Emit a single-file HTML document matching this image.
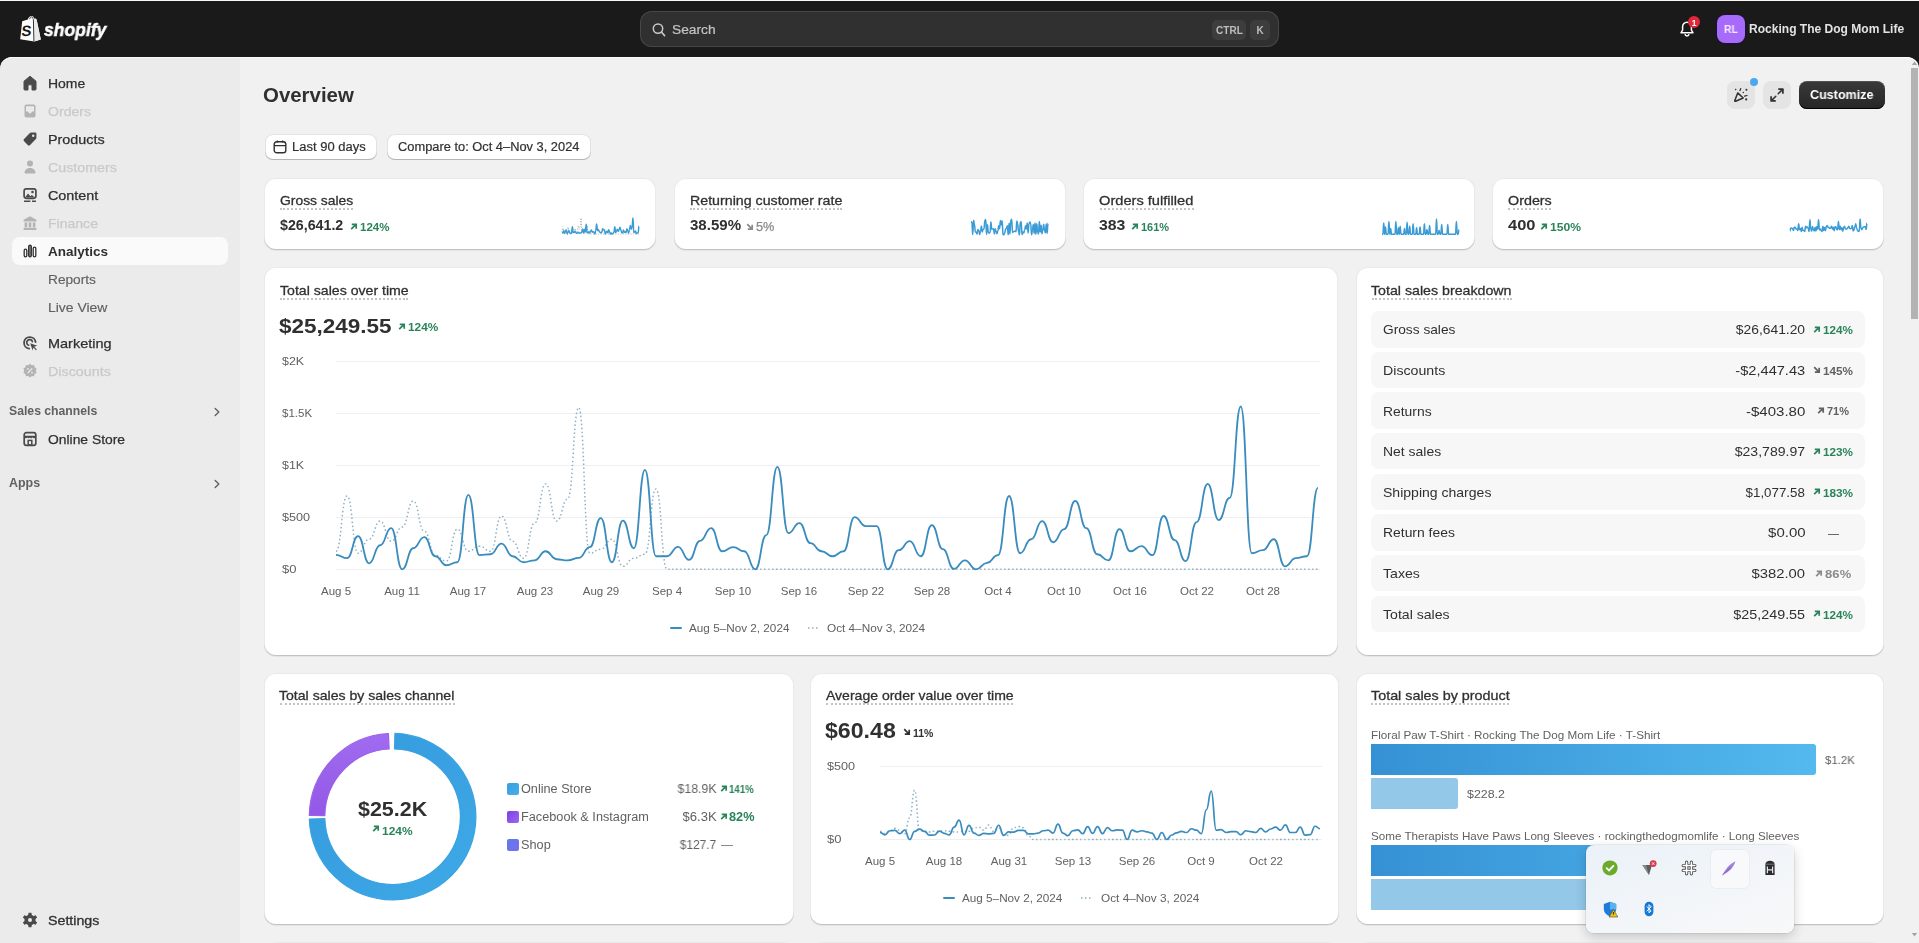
<!DOCTYPE html><html><head><meta charset="utf-8"><title>Analytics</title><style>
*{box-sizing:border-box;margin:0;padding:0}
html,body{width:1919px;height:943px;overflow:hidden;background:#1a1a1a;font-family:"Liberation Sans",sans-serif;color:#303030}
.abs{position:absolute}
#topline{left:0;top:0;width:1919px;height:1px;background:#fbf6ef}
#topbar{left:0;top:1px;width:1919px;height:56px;background:#1a1a1a}
#side{left:0;top:57px;width:240px;height:886px;background:#ebebeb;border-top-left-radius:12px;box-shadow:inset 0 1px 0 #f7f7f7}
#main{left:240px;top:57px;width:1679px;height:886px;background:#f1f1f1;border-top-right-radius:12px;box-shadow:inset 0 1px 0 #fbfbfb}
.card{position:absolute;background:#fff;border-radius:12px;box-shadow:0 1px 0 rgba(26,26,26,.06),inset 0 -1px 0 rgba(0,0,0,.16),inset 0 0 0 1px rgba(0,0,0,.085)}
.ul{position:absolute;height:2px;border-top:2px dotted #c4c4c4}
.btn{position:absolute;background:#fff;border-radius:8px;box-shadow:inset 0 -1px 0 #b5b5b5,inset 0 0 0 1px #e3e3e3}
</style></head><body><div id="topline" class="abs"></div><div id="topbar" class="abs"></div><div id="side" class="abs"></div><div id="main" class="abs"></div><svg class="abs" style="left:19px;top:15px" width="23" height="28" viewBox="0 0 23 28">
<path d="M3.2 6.2 L8.8 4.6 C9.6 2 11 0.8 12.6 0.9 C14 1 14.9 2.2 15.1 3.6 L16.6 3.4 L17.6 4.4 L21.8 24.6 L15.2 26.6 L1.2 24.2 Z" fill="#fff"/>
<path d="M15.2 4 L17.6 4.4 L21.8 24.6 L15.2 26.6 Z" fill="#e9e9e9"/>
<path d="M14.9 26.4 L14.4 4.2" stroke="#1a1a1a" stroke-width="0.9"/>
<path d="M10.6 4.2 C11 2.6 11.8 1.8 12.6 1.9 C13.4 2 13.8 2.8 13.9 3.8" stroke="#1a1a1a" stroke-width="0.8" fill="none"/>
<text x="4.3" y="21.2" font-family="Liberation Sans" font-weight="bold" font-size="15" fill="#1a1a1a" transform="skewX(-6)">S</text>
</svg><div style="position:absolute;white-space:nowrap;will-change:transform;top:19px;font-size:19px;line-height:21px;color:#ffffff;font-weight:bold;transform:scaleX(0.922);transform-origin:left;left:43.65px;font-style:italic;-webkit-text-stroke:0.5px #fff;">shopify</div><div class="abs" style="left:640px;top:11px;width:639px;height:36px;border-radius:12px;background:#303030;box-shadow:inset 0 0 0 1px #474747"></div><svg class="abs" style="left:651px;top:22px" width="16" height="16" viewBox="0 0 16 16"><circle cx="7" cy="6.6" r="4.7" stroke="#c9c9c9" stroke-width="1.5" fill="none"/><path d="M10.4 10L13.6 13.6" stroke="#c9c9c9" stroke-width="1.6" stroke-linecap="round"/></svg><div style="position:absolute;white-space:nowrap;will-change:transform;top:22px;font-size:13px;line-height:15px;color:#c4c4c4;-webkit-text-stroke-width:0.2px;transform:scaleX(1.057);transform-origin:left;left:671.85px;">Search</div><div class="abs" style="left:1212px;top:20px;width:34px;height:20px;border-radius:5px;background:#3d3d3d"></div><div style="position:absolute;white-space:nowrap;will-change:transform;top:25px;font-size:10px;line-height:11px;color:#bdbdbd;font-weight:bold;transform:scaleX(1.005);transform-origin:left;left:1215.5px;">CTRL</div><div class="abs" style="left:1250px;top:20px;width:20px;height:20px;border-radius:5px;background:#3d3d3d"></div><div style="position:absolute;white-space:nowrap;will-change:transform;top:25px;font-size:10px;line-height:11px;color:#bdbdbd;font-weight:bold;left:960px;width:600px;text-align:center;">K</div><svg class="abs" style="left:1678px;top:19px" width="18" height="19" viewBox="0 0 18 19">
<path d="M9 3.2C6.5 3.2 4.6 5.2 4.6 7.8V11L3 13.8H15L13.4 11V7.8C13.4 5.2 11.5 3.2 9 3.2Z" stroke="#fff" stroke-width="1.5" fill="none" stroke-linejoin="round"/>
<path d="M7 15.2C7.2 16.4 8 17 9 17C10 17 10.8 16.4 11 15.2" stroke="#fff" stroke-width="1.5" fill="none"/></svg><div class="abs" style="left:1688px;top:16px;width:12px;height:12px;border-radius:6px;background:#e0283a"></div><div style="position:absolute;white-space:nowrap;will-change:transform;top:17.6px;font-size:8.5px;line-height:10px;color:#ffffff;font-weight:bold;left:1394.2px;width:600px;text-align:center;">1</div><div class="abs" style="left:1716px;top:14px;width:30px;height:30px;border-radius:9px;background:#1e0f33"></div><div class="abs" style="left:1717px;top:15px;width:28px;height:28px;border-radius:8px;background:#a66bfa"></div><div style="position:absolute;white-space:nowrap;will-change:transform;top:23px;font-size:11px;line-height:12px;color:#f6e8ff;font-weight:bold;transform:scaleX(0.943);transform-origin:left;left:1724.25px;">RL</div><div style="position:absolute;white-space:nowrap;will-change:transform;top:22px;font-size:12px;line-height:14px;color:#e3e3e3;font-weight:bold;transform:scaleX(1.003);transform-origin:left;left:1749.2px;">Rocking The Dog Mom Life</div><svg class="abs" style="left:21px;top:74px" width="18" height="18" viewBox="0 0 18 18"><path d="M9 2.2L3 7.2V15.2C3 15.6 3.3 16 3.8 16H7V11.8C7 11.2 7.4 10.8 8 10.8H10C10.6 10.8 11 11.2 11 11.8V16H14.2C14.7 16 15 15.6 15 15.2V7.2Z" fill="#4a4a4a" stroke="#4a4a4a" stroke-width="1" stroke-linejoin="round"/></svg><div style="position:absolute;white-space:nowrap;will-change:transform;top:76px;font-size:13px;line-height:15px;color:#303030;-webkit-text-stroke-width:0.25px;transform:scaleX(1.074);transform-origin:left;left:47.75px;">Home</div><svg class="abs" style="left:21px;top:102px" width="18" height="18" viewBox="0 0 18 18"><path d="M3.5 4.5C3.5 3.4 4.4 2.5 5.5 2.5H12.5C13.6 2.5 14.5 3.4 14.5 4.5V13.5C14.5 14.6 13.6 15.5 12.5 15.5H5.5C4.4 15.5 3.5 14.6 3.5 13.5Z" fill="#b3b3b3"/><path d="M5 4.2H13V9.6H11C10.6 10.8 9.9 11.4 9 11.4C8.1 11.4 7.4 10.8 7 9.6H5Z" fill="#ebebeb"/></svg><div style="position:absolute;white-space:nowrap;will-change:transform;top:104px;font-size:13px;line-height:15px;color:#c9c9c9;-webkit-text-stroke-width:0.25px;transform:scaleX(1.084);transform-origin:left;left:47.75px;">Orders</div><svg class="abs" style="left:21px;top:130px" width="18" height="18" viewBox="0 0 18 18"><path d="M10.2 2.6H14.2C14.9 2.6 15.4 3.1 15.4 3.8V7.8C15.4 8.3 15.2 8.7 14.9 9.1L9.1 14.9C8.4 15.6 7.4 15.6 6.7 14.9L3.1 11.3C2.4 10.6 2.4 9.6 3.1 8.9L8.9 3.1C9.3 2.8 9.7 2.6 10.2 2.6Z" fill="#4a4a4a"/><circle cx="12.2" cy="5.8" r="1.2" fill="#ebebeb"/></svg><div style="position:absolute;white-space:nowrap;will-change:transform;top:132px;font-size:13px;line-height:15px;color:#303030;-webkit-text-stroke-width:0.25px;transform:scaleX(1.105);transform-origin:left;left:47.75px;">Products</div><svg class="abs" style="left:21px;top:158px" width="18" height="18" viewBox="0 0 18 18"><circle cx="9" cy="5.6" r="3" fill="#b3b3b3"/><path d="M3.6 14.6C3.6 11.8 6 10 9 10C12 10 14.4 11.8 14.4 14.6C14.4 15.2 14 15.6 13.4 15.6H4.6C4 15.6 3.6 15.2 3.6 14.6Z" fill="#b3b3b3"/></svg><div style="position:absolute;white-space:nowrap;will-change:transform;top:160px;font-size:13px;line-height:15px;color:#c9c9c9;-webkit-text-stroke-width:0.25px;transform:scaleX(1.096);transform-origin:left;left:47.75px;">Customers</div><svg class="abs" style="left:21px;top:186px" width="18" height="18" viewBox="0 0 18 18"><rect x="3.1" y="2.9" width="11.8" height="9.4" rx="2.2" stroke="#4a4a4a" stroke-width="1.7" fill="none"/><path d="M4 11.4L7 7.6L9.4 10.2L10.8 9L14 11.6Z" fill="#4a4a4a"/><circle cx="11.5" cy="6" r="1.3" fill="#4a4a4a"/><path d="M3 15.3H9.4M11 15.3H15" stroke="#4a4a4a" stroke-width="1.6"/></svg><div style="position:absolute;white-space:nowrap;will-change:transform;top:188px;font-size:13px;line-height:15px;color:#303030;-webkit-text-stroke-width:0.25px;transform:scaleX(1.105);transform-origin:left;left:47.75px;">Content</div><svg class="abs" style="left:21px;top:214px" width="18" height="18" viewBox="0 0 18 18"><path d="M9 2.2L2.6 5.8V7.6H15.4V5.8Z" fill="#b3b3b3"/><rect x="3.6" y="8.4" width="2.6" height="4.8" fill="#b3b3b3"/><rect x="7.7" y="8.4" width="2.6" height="4.8" fill="#b3b3b3"/><rect x="11.8" y="8.4" width="2.6" height="4.8" fill="#b3b3b3"/><rect x="2.6" y="13.8" width="12.8" height="2.2" rx="0.6" fill="#b3b3b3"/></svg><div style="position:absolute;white-space:nowrap;will-change:transform;top:216px;font-size:13px;line-height:15px;color:#c9c9c9;-webkit-text-stroke-width:0.25px;transform:scaleX(1.080);transform-origin:left;left:47.75px;">Finance</div><div class="abs" style="left:12px;top:237px;width:216px;height:28px;border-radius:8px;background:#fafafa"></div><svg class="abs" style="left:21px;top:242px" width="18" height="18" viewBox="0 0 18 18"><rect x="3.2" y="7.2" width="2.6" height="7.6" rx="1.3" stroke="#303030" stroke-width="1.3" fill="none"/><rect x="7.7" y="3.2" width="2.6" height="11.6" rx="1.3" stroke="#303030" stroke-width="1.3" fill="#8a8a8a"/><rect x="12.2" y="5.2" width="2.6" height="9.6" rx="1.3" stroke="#303030" stroke-width="1.3" fill="none"/></svg><div style="position:absolute;white-space:nowrap;will-change:transform;top:244px;font-size:13px;line-height:15px;color:#303030;font-weight:bold;transform:scaleX(1.040);transform-origin:left;left:47.75px;">Analytics</div><div style="position:absolute;white-space:nowrap;will-change:transform;top:272px;font-size:13px;line-height:15px;color:#616161;-webkit-text-stroke-width:0.15px;transform:scaleX(1.053);transform-origin:left;left:47.95px;">Reports</div><div style="position:absolute;white-space:nowrap;will-change:transform;top:300px;font-size:13px;line-height:15px;color:#616161;-webkit-text-stroke-width:0.15px;transform:scaleX(1.073);transform-origin:left;left:47.95px;">Live View</div><svg class="abs" style="left:21px;top:334px" width="18" height="18" viewBox="0 0 18 18"><path d="M14.6 8.2A5.8 5.8 0 1 0 8.2 14.6" stroke="#4a4a4a" stroke-width="1.8" fill="none" stroke-linecap="round"/><path d="M11.4 7.6A2.9 2.9 0 1 0 7.6 11.2" stroke="#4a4a4a" stroke-width="1.7" fill="none" stroke-linecap="round"/><path d="M9.2 9.2L16.2 11.8L13.2 12.8L15.8 15.4L15 16.2L12.4 13.6L11.6 16.4Z" fill="#4a4a4a"/></svg><div style="position:absolute;white-space:nowrap;will-change:transform;top:336.4px;font-size:13px;line-height:15px;color:#303030;-webkit-text-stroke-width:0.25px;transform:scaleX(1.114);transform-origin:left;left:47.65px;">Marketing</div><svg class="abs" style="left:21px;top:362px" width="18" height="18" viewBox="0 0 18 18"><path d="M9 1.8L10.8 3.2L13.1 3L13.6 5.2L15.6 6.4L14.8 8.6L15.6 10.8L13.6 12L13.1 14.2L10.8 14L9 15.6L7.2 14L4.9 14.2L4.4 12L2.4 10.8L3.2 8.6L2.4 6.4L4.4 5.2L4.9 3L7.2 3.2Z" fill="#b3b3b3"/><path d="M6.8 11L11.2 6.4" stroke="#ebebeb" stroke-width="1.3"/><circle cx="7" cy="6.8" r="0.9" fill="#ebebeb"/><circle cx="11" cy="10.6" r="0.9" fill="#ebebeb"/></svg><div style="position:absolute;white-space:nowrap;will-change:transform;top:364px;font-size:13px;line-height:15px;color:#c9c9c9;-webkit-text-stroke-width:0.25px;transform:scaleX(1.102);transform-origin:left;left:47.65px;">Discounts</div><div style="position:absolute;white-space:nowrap;will-change:transform;top:404px;font-size:12px;line-height:14px;color:#616161;font-weight:bold;transform:scaleX(1.018);transform-origin:left;left:8.9px;">Sales channels</div><svg class="abs" style="left:210px;top:405px" width="14" height="14" viewBox="0 0 14 14"><path d="M5.2 3.4L8.8 7L5.2 10.6" stroke="#616161" stroke-width="1.4" fill="none" stroke-linecap="round" stroke-linejoin="round"/></svg><svg class="abs" style="left:21px;top:430px" width="18" height="18" viewBox="0 0 18 18"><rect x="3.2" y="2.6" width="11.6" height="12.8" rx="2.2" stroke="#4a4a4a" stroke-width="1.7" fill="none"/><path d="M3.6 5.8H14.4V7.6C13.6 8.6 12.4 8.6 11.6 7.6C10.8 8.6 9.6 8.6 9 7.6C8.4 8.6 7.2 8.6 6.4 7.6C5.6 8.6 4.4 8.6 3.6 7.6Z" fill="#4a4a4a"/><rect x="7.2" y="10.4" width="3.6" height="4.6" stroke="#4a4a4a" stroke-width="1.5" fill="none"/></svg><div style="position:absolute;white-space:nowrap;will-change:transform;top:432px;font-size:13px;line-height:15px;color:#303030;-webkit-text-stroke-width:0.25px;transform:scaleX(1.066);transform-origin:left;left:47.65px;">Online Store</div><div style="position:absolute;white-space:nowrap;will-change:transform;top:476px;font-size:12px;line-height:14px;color:#616161;font-weight:bold;transform:scaleX(1.037);transform-origin:left;left:8.8px;">Apps</div><svg class="abs" style="left:210px;top:477px" width="14" height="14" viewBox="0 0 14 14"><path d="M5.2 3.4L8.8 7L5.2 10.6" stroke="#616161" stroke-width="1.4" fill="none" stroke-linecap="round" stroke-linejoin="round"/></svg><svg class="abs" style="left:21px;top:911px" width="18" height="18" viewBox="0 0 18 18"><path d="M7.6 1.8H10.4L10.9 3.9L12.6 4.9L14.7 4.2L16.1 6.6L14.5 8.1V9.9L16.1 11.4L14.7 13.8L12.6 13.1L10.9 14.1L10.4 16.2H7.6L7.1 14.1L5.4 13.1L3.3 13.8L1.9 11.4L3.5 9.9V8.1L1.9 6.6L3.3 4.2L5.4 4.9L7.1 3.9Z" fill="#4a4a4a"/><circle cx="9" cy="9" r="2" fill="#ebebeb"/></svg><div style="position:absolute;white-space:nowrap;will-change:transform;top:913px;font-size:13px;line-height:15px;color:#303030;-webkit-text-stroke-width:0.3px;transform:scaleX(1.094);transform-origin:left;left:47.85px;">Settings</div><div style="position:absolute;white-space:nowrap;will-change:transform;top:84.3px;font-size:20px;line-height:22px;color:#303030;font-weight:bold;transform:scaleX(1.021);transform-origin:left;left:263.4px;">Overview</div><div class="abs" style="left:1727px;top:81px;width:28px;height:28px;border-radius:8px;background:#e4e4e4"></div><svg class="abs" style="left:1732px;top:86px" width="18" height="18" viewBox="0 0 18 18">
<path d="M5.7 6.9L11.2 12L3.6 15.2C3 15.4 2.6 15 2.8 14.4Z" stroke="#303030" stroke-width="1.5" fill="none" stroke-linejoin="round"/>
<path d="M3.7 2.6L4.6 3.5L3.7 4.4L2.8 3.5Z" fill="#303030"/><path d="M8 4.6L8.7 2.6M12.6 10.2L15 9.5" stroke="#303030" stroke-width="1.3" stroke-linecap="round"/>
<circle cx="14.4" cy="3.7" r="1.05" fill="#303030"/><circle cx="11.3" cy="6.6" r="0.75" fill="#303030"/><circle cx="14.2" cy="13.4" r="1.1" fill="#303030"/></svg><div class="abs" style="left:1750px;top:78px;width:8px;height:8px;border-radius:4px;background:#4ba8f0"></div><div class="abs" style="left:1763px;top:81px;width:28px;height:28px;border-radius:8px;background:#e4e4e4"></div><svg class="abs" style="left:1768px;top:86px" width="18" height="18" viewBox="0 0 18 18">
<path d="M4.4 13.6L7.8 10.2M10.2 7.8L13.6 4.4" stroke="#303030" stroke-width="1.5" stroke-linecap="round"/>
<path d="M10.9 3.1H14.9V7.1M3.1 10.9V14.9H7.1" stroke="#303030" stroke-width="1.7" fill="none" stroke-linejoin="round" stroke-linecap="round"/></svg><div class="abs" style="left:1799px;top:81px;width:86px;height:28px;border-radius:8px;background:linear-gradient(#3a3a3a,#262626);box-shadow:inset 0 -1px 0 #000,inset 0 1px 0 rgba(255,255,255,.12)"></div><div style="position:absolute;white-space:nowrap;will-change:transform;top:87px;font-size:13px;line-height:15px;color:#ffffff;font-weight:bold;transform:scaleX(0.965);transform-origin:left;left:1810.05px;">Customize</div><div class="btn" style="left:265px;top:134px;width:112px;height:26px"></div><svg class="abs" style="left:272px;top:139px" width="16" height="16" viewBox="0 0 16 16"><rect x="2.2" y="2.8" width="11.6" height="11" rx="2.6" stroke="#303030" stroke-width="1.4" fill="none"/><path d="M2.4 6.6H13.6M5.4 1.6V3.6M10.6 1.6V3.6" stroke="#303030" stroke-width="1.4"/></svg><div style="position:absolute;white-space:nowrap;will-change:transform;top:140.1px;font-size:12.5px;line-height:14px;color:#303030;-webkit-text-stroke-width:0.2px;transform:scaleX(1.039);transform-origin:left;left:291.88px;">Last 90 days</div><div class="btn" style="left:387px;top:134px;width:204px;height:26px"></div><div style="position:absolute;white-space:nowrap;will-change:transform;top:140.1px;font-size:12.5px;line-height:14px;color:#303030;-webkit-text-stroke-width:0.2px;transform:scaleX(1.028);transform-origin:left;left:397.88px;">Compare to: Oct 4–Nov 3, 2024</div><div class="card" style="left:264.3px;top:177.6px;width:392px;height:72.6px"></div><div style="position:absolute;white-space:nowrap;will-change:transform;top:193px;font-size:13.5px;line-height:15px;color:#303030;-webkit-text-stroke-width:0.3px;transform:scaleX(1.028);transform-origin:left;left:279.82px;">Gross sales</div><div class="ul" style="left:280px;top:208px;width:73px"></div><div style="position:absolute;white-space:nowrap;will-change:transform;top:217.2px;font-size:14px;line-height:16px;color:#303030;font-weight:bold;transform:scaleX(1.016);transform-origin:left;left:279.8px;">$26,641.2</div><svg style="position:absolute;left:350.2px;top:222.8px" width="8" height="8" viewBox="0 0 8 8"><path d="M1.2 6.2 L5.6 1.8 M1.8 1.4 H6.2 V5.8" stroke="#29845a" stroke-width="1.7" fill="none" stroke-linecap="butt" stroke-linejoin="miter"/></svg><div style="position:absolute;white-space:nowrap;will-change:transform;top:221px;font-size:11px;line-height:12px;color:#29845a;font-weight:bold;transform:scaleX(1.050);transform-origin:left;left:360.35px;">124%</div><svg class="abs" style="left:562px;top:218px;overflow:visible" width="77" height="16"><path d="M0.0,14.2C0.43,14.23 0.43,8.79 0.87,8.79C1.30,8.79 1.30,14.42 1.73,14.42C2.16,14.42 2.16,13.04 2.60,13.04C3.03,13.04 3.03,11.26 3.46,11.26C3.89,11.26 3.89,13.24 4.33,13.24C4.76,13.24 4.76,11.85 5.19,11.85C5.62,11.85 5.62,9.28 6.06,9.28C6.49,9.28 6.49,12.25 6.92,12.25C7.35,12.25 7.35,14.61 7.79,14.61C8.22,14.61 8.22,15.21 8.65,15.21C9.08,15.21 9.08,12.05 9.52,12.05C9.95,12.05 9.95,14.23 10.38,14.23C10.81,14.23 10.81,13.73 11.25,13.73C11.68,13.73 11.68,14.23 12.11,14.23C12.54,14.23 12.54,10.76 12.98,10.76C13.41,10.76 13.41,13.24 13.84,13.24C14.28,13.24 14.28,14.91 14.71,14.91C15.14,14.91 15.14,11.46 15.57,11.46C16.01,11.46 16.01,7.61 16.44,7.61C16.87,7.61 16.87,11.26 17.30,11.26C17.74,11.26 17.74,9.09 18.17,9.09C18.60,9.09 18.60,0.10 19.03,0.10C19.47,0.10 19.47,14.42 19.90,14.42C20.33,14.42 20.33,14.02 20.76,14.02C21.20,14.02 21.20,13.04 21.63,13.04C22.06,13.04 22.06,15.70 22.49,15.70C22.93,15.70 22.93,14.91 23.36,14.91C23.79,14.91 23.79,14.52 24.22,14.52C24.66,14.52 24.66,8.10 25.09,8.10C25.52,8.10 25.52,16.00 25.96,16.00C26.39,16.00 26.39,16.00 26.82,16.00C27.25,16.00 27.25,16.00 27.69,16.00C28.12,16.00 28.12,16.00 28.55,16.00C28.98,16.00 28.98,16.00 29.42,16.00C29.85,16.00 29.85,16.00 30.28,16.00C30.71,16.00 30.71,16.00 31.15,16.00C31.58,16.00 31.58,16.00 32.01,16.00C32.44,16.00 32.44,16.00 32.88,16.00C33.31,16.00 33.31,16.00 33.74,16.00C34.17,16.00 34.17,16.00 34.61,16.00C35.04,16.00 35.04,16.00 35.47,16.00C35.90,16.00 35.90,16.00 36.34,16.00C36.77,16.00 36.77,16.00 37.20,16.00C37.63,16.00 37.63,16.00 38.07,16.00C38.50,16.00 38.50,16.00 38.93,16.00C39.37,16.00 39.37,16.00 39.80,16.00C40.23,16.00 40.23,16.00 40.66,16.00C41.10,16.00 41.10,16.00 41.53,16.00C41.96,16.00 41.96,16.00 42.39,16.00C42.83,16.00 42.83,16.00 43.26,16.00C43.69,16.00 43.69,16.00 44.12,16.00C44.56,16.00 44.56,16.00 44.99,16.00C45.42,16.00 45.42,16.00 45.85,16.00C46.29,16.00 46.29,16.00 46.72,16.00C47.15,16.00 47.15,16.00 47.58,16.00C48.02,16.00 48.02,16.00 48.45,16.00C48.88,16.00 48.88,16.00 49.31,16.00C49.75,16.00 49.75,16.00 50.18,16.00C50.61,16.00 50.61,16.00 51.04,16.00C51.48,16.00 51.48,16.00 51.91,16.00C52.34,16.00 52.34,16.00 52.78,16.00C53.21,16.00 53.21,16.00 53.64,16.00C54.07,16.00 54.07,16.00 54.51,16.00C54.94,16.00 54.94,16.00 55.37,16.00C55.80,16.00 55.80,16.00 56.24,16.00C56.67,16.00 56.67,16.00 57.10,16.00C57.53,16.00 57.53,16.00 57.97,16.00C58.40,16.00 58.40,16.00 58.83,16.00C59.26,16.00 59.26,16.00 59.70,16.00C60.13,16.00 60.13,16.00 60.56,16.00C60.99,16.00 60.99,16.00 61.43,16.00C61.86,16.00 61.86,16.00 62.29,16.00C62.72,16.00 62.72,16.00 63.16,16.00C63.59,16.00 63.59,16.00 64.02,16.00C64.46,16.00 64.46,16.00 64.89,16.00C65.32,16.00 65.32,16.00 65.75,16.00C66.19,16.00 66.19,16.00 66.62,16.00C67.05,16.00 67.05,16.00 67.48,16.00C67.92,16.00 67.92,16.00 68.35,16.00C68.78,16.00 68.78,16.00 69.21,16.00C69.65,16.00 69.65,16.00 70.08,16.00C70.51,16.00 70.51,16.00 70.94,16.00C71.38,16.00 71.38,16.00 71.81,16.00C72.24,16.00 72.24,16.00 72.67,16.00C73.11,16.00 73.11,16.00 73.54,16.00C73.97,16.00 73.97,16.00 74.40,16.00C74.84,16.00 74.84,16.00 75.27,16.00C75.70,16.00 75.70,16.00 76.13,16.00C76.57,16.00 76.57,16.00 77.00,16.00" stroke="#a3adb5" stroke-width="1" fill="none" stroke-dasharray="1 1.5"/><path d="M0.0,14.6C0.43,14.57 0.43,14.91 0.87,14.91C1.30,14.91 1.30,12.74 1.73,12.74C2.16,12.74 2.16,15.41 2.60,15.41C3.03,15.41 3.03,13.64 3.46,13.64C3.89,13.64 3.89,11.95 4.33,11.95C4.76,11.95 4.76,16.00 5.19,16.00C5.62,16.00 5.62,13.93 6.06,13.93C6.49,13.93 6.49,12.84 6.92,12.84C7.35,12.84 7.35,14.72 7.79,14.72C8.22,14.72 8.22,15.60 8.65,15.60C9.08,15.60 9.08,15.31 9.52,15.31C9.95,15.31 9.95,8.69 10.38,8.69C10.81,8.69 10.81,14.61 11.25,14.61C11.68,14.61 11.68,14.52 12.11,14.52C12.54,14.52 12.54,13.47 12.98,13.47C13.41,13.47 13.41,14.72 13.84,14.72C14.28,14.72 14.28,15.31 14.71,15.31C15.14,15.31 15.14,15.11 15.57,15.11C16.01,15.11 16.01,14.23 16.44,14.23C16.87,14.23 16.87,15.01 17.30,15.01C17.74,15.01 17.74,15.11 18.17,15.11C18.60,15.11 18.60,14.88 19.03,14.88C19.47,14.88 19.47,13.83 19.90,13.83C20.33,13.83 20.33,10.97 20.76,10.97C21.20,10.97 21.20,15.31 21.63,15.31C22.06,15.31 22.06,11.22 22.49,11.22C22.93,11.22 22.93,13.93 23.36,13.93C23.79,13.93 23.79,6.23 24.22,6.23C24.66,6.23 24.66,14.72 25.09,14.72C25.52,14.72 25.52,14.72 25.96,14.72C26.39,14.72 26.39,13.79 26.82,13.79C27.25,13.79 27.25,15.07 27.69,15.07C28.12,15.07 28.12,13.20 28.55,13.20C28.98,13.20 28.98,11.95 29.42,11.95C29.85,11.95 29.85,14.23 30.28,14.23C30.71,14.23 30.71,13.83 31.15,13.83C31.58,13.83 31.58,14.23 32.01,14.23C32.44,14.23 32.44,16.00 32.88,16.00C33.31,16.00 33.31,12.65 33.74,12.65C34.17,12.65 34.17,5.93 34.61,5.93C35.04,5.93 35.04,12.44 35.47,12.44C35.90,12.44 35.90,11.45 36.34,11.45C36.77,11.45 36.77,13.43 37.20,13.43C37.63,13.43 37.63,14.23 38.07,14.23C38.50,14.23 38.50,14.72 38.93,14.72C39.37,14.72 39.37,14.23 39.80,14.23C40.23,14.23 40.23,10.86 40.66,10.86C41.10,10.86 41.10,11.75 41.53,11.75C41.96,11.75 41.96,11.75 42.39,11.75C42.83,11.75 42.83,16.00 43.26,16.00C43.69,16.00 43.69,14.12 44.12,14.12C44.56,14.12 44.56,13.24 44.99,13.24C45.42,13.24 45.42,14.72 45.85,14.72C46.29,14.72 46.29,11.66 46.72,11.66C47.15,11.66 47.15,14.02 47.58,14.02C48.02,14.02 48.02,15.96 48.45,15.96C48.88,15.96 48.88,15.11 49.31,15.11C49.75,15.11 49.75,16.00 50.18,16.00C50.61,16.00 50.61,15.37 51.04,15.37C51.48,15.37 51.48,14.61 51.91,14.61C52.34,14.61 52.34,8.79 52.78,8.79C53.21,8.79 53.21,14.42 53.64,14.42C54.07,14.42 54.07,13.04 54.51,13.04C54.94,13.04 54.94,11.26 55.37,11.26C55.80,11.26 55.80,13.34 56.24,13.34C56.67,13.34 56.67,12.05 57.10,12.05C57.53,12.05 57.53,9.28 57.97,9.28C58.40,9.28 58.40,11.95 58.83,11.95C59.26,11.95 59.26,14.52 59.70,14.52C60.13,14.52 60.13,15.11 60.56,15.11C60.99,15.11 60.99,12.05 61.43,12.05C61.86,12.05 61.86,14.23 62.29,14.23C62.72,14.23 62.72,13.73 63.16,13.73C63.59,13.73 63.59,14.61 64.02,14.61C64.46,14.61 64.46,10.76 64.89,10.76C65.32,10.76 65.32,13.14 65.75,13.14C66.19,13.14 66.19,15.21 66.62,15.21C67.05,15.21 67.05,11.36 67.48,11.36C67.92,11.36 67.92,7.61 68.35,7.61C68.78,7.61 68.78,11.16 69.21,11.16C69.65,11.16 69.65,8.99 70.08,8.99C70.51,8.99 70.51,0.00 70.94,0.00C71.38,0.00 71.38,14.42 71.81,14.42C72.24,14.42 72.24,14.12 72.67,14.12C73.11,14.12 73.11,13.04 73.54,13.04C73.97,13.04 73.97,15.70 74.40,15.70C74.84,15.70 74.84,14.91 75.27,14.91C75.70,14.91 75.70,14.72 76.13,14.72C76.57,14.72 76.57,8.00 77.00,8.00" stroke="#3a9bd5" stroke-width="1.5" fill="none"/></svg><div class="card" style="left:673.5px;top:177.6px;width:392px;height:72.6px"></div><div style="position:absolute;white-space:nowrap;will-change:transform;top:193px;font-size:13.5px;line-height:15px;color:#303030;-webkit-text-stroke-width:0.3px;transform:scaleX(1.052);transform-origin:left;left:689.83px;">Returning customer rate</div><div class="ul" style="left:690px;top:208px;width:152px"></div><div style="position:absolute;white-space:nowrap;will-change:transform;top:217.2px;font-size:14px;line-height:16px;color:#303030;font-weight:bold;transform:scaleX(1.075);transform-origin:left;left:689.8px;">38.59%</div><svg style="position:absolute;left:746px;top:222.8px" width="8" height="8" viewBox="0 0 8 8"><path d="M1.2 1.2 L5.6 5.6 M6.2 1.8 V6.2 H1.8" stroke="#8a8a8a" stroke-width="1.7" fill="none" stroke-linecap="butt" stroke-linejoin="miter"/></svg><div style="position:absolute;white-space:nowrap;will-change:transform;top:220px;font-size:12px;line-height:14px;color:#8a8a8a;-webkit-text-stroke-width:0.25px;transform:scaleX(1.058);transform-origin:left;left:756.2px;">5%</div><svg class="abs" style="left:971px;top:219px;overflow:visible" width="77" height="16"><path d="M0.0,3.3C0.43,3.28 0.43,2.85 0.87,2.85C1.30,2.85 1.30,15.58 1.73,15.58C2.16,15.58 2.16,1.17 2.60,1.17C3.03,1.17 3.03,5.51 3.46,5.51C3.89,5.51 3.89,12.99 4.33,12.99C4.76,12.99 4.76,12.95 5.19,12.95C5.62,12.95 5.62,15.04 6.06,15.04C6.49,15.04 6.49,10.44 6.92,10.44C7.35,10.44 7.35,11.26 7.79,11.26C8.22,11.26 8.22,15.59 8.65,15.59C9.08,15.59 9.08,12.22 9.52,12.22C9.95,12.22 9.95,6.98 10.38,6.98C10.81,6.98 10.81,12.97 11.25,12.97C11.68,12.97 11.68,10.38 12.11,10.38C12.54,10.38 12.54,10.10 12.98,10.10C13.41,10.10 13.41,1.43 13.84,1.43C14.28,1.43 14.28,0.46 14.71,0.46C15.14,0.46 15.14,15.38 15.57,15.38C16.01,15.38 16.01,5.64 16.44,5.64C16.87,5.64 16.87,13.21 17.30,13.21C17.74,13.21 17.74,14.07 18.17,14.07C18.60,14.07 18.60,13.53 19.03,13.53C19.47,13.53 19.47,2.99 19.90,2.99C20.33,2.99 20.33,10.21 20.76,10.21C21.20,10.21 21.20,10.05 21.63,10.05C22.06,10.05 22.06,9.66 22.49,9.66C22.93,9.66 22.93,14.96 23.36,14.96C23.79,14.96 23.79,9.83 24.22,9.83C24.66,9.83 24.66,12.36 25.09,12.36C25.52,12.36 25.52,14.65 25.96,14.65C26.39,14.65 26.39,12.33 26.82,12.33C27.25,12.33 27.25,6.74 27.69,6.74C28.12,6.74 28.12,9.67 28.55,9.67C28.98,9.67 28.98,1.44 29.42,1.44C29.85,1.44 29.85,6.11 30.28,6.11C30.71,6.11 30.71,1.66 31.15,1.66C31.58,1.66 31.58,15.72 32.01,15.72C32.44,15.72 32.44,15.71 32.88,15.71C33.31,15.71 33.31,13.88 33.74,13.88C34.17,13.88 34.17,9.72 34.61,9.72C35.04,9.72 35.04,9.61 35.47,9.61C35.90,9.61 35.90,6.65 36.34,6.65C36.77,6.65 36.77,15.80 37.20,15.80C37.63,15.80 37.63,4.26 38.07,4.26C38.50,4.26 38.50,15.00 38.93,15.00C39.37,15.00 39.37,0.95 39.80,0.95C40.23,0.95 40.23,0.30 40.66,0.30C41.10,0.30 41.10,13.58 41.53,13.58C41.96,13.58 41.96,12.67 42.39,12.67C42.83,12.67 42.83,12.19 43.26,12.19C43.69,12.19 43.69,12.03 44.12,12.03C44.56,12.03 44.56,12.76 44.99,12.76C45.42,12.76 45.42,2.01 45.85,2.01C46.29,2.01 46.29,5.03 46.72,5.03C47.15,5.03 47.15,12.66 47.58,12.66C48.02,12.66 48.02,15.93 48.45,15.93C48.88,15.93 48.88,3.02 49.31,3.02C49.75,3.02 49.75,2.77 50.18,2.77C50.61,2.77 50.61,15.62 51.04,15.62C51.48,15.62 51.48,13.02 51.91,13.02C52.34,13.02 52.34,13.74 52.78,13.74C53.21,13.74 53.21,11.28 53.64,11.28C54.07,11.28 54.07,6.76 54.51,6.76C54.94,6.76 54.94,9.83 55.37,9.83C55.80,9.83 55.80,3.91 56.24,3.91C56.67,3.91 56.67,13.95 57.10,13.95C57.53,13.95 57.53,4.95 57.97,4.95C58.40,4.95 58.40,2.91 58.83,2.91C59.26,2.91 59.26,4.48 59.70,4.48C60.13,4.48 60.13,15.83 60.56,15.83C60.99,15.83 60.99,11.29 61.43,11.29C61.86,11.29 61.86,5.60 62.29,5.60C62.72,5.60 62.72,14.47 63.16,14.47C63.59,14.47 63.59,4.07 64.02,4.07C64.46,4.07 64.46,15.35 64.89,15.35C65.32,15.35 65.32,4.80 65.75,4.80C66.19,4.80 66.19,13.19 66.62,13.19C67.05,13.19 67.05,14.92 67.48,14.92C67.92,14.92 67.92,2.52 68.35,2.52C68.78,2.52 68.78,13.11 69.21,13.11C69.65,13.11 69.65,6.33 70.08,6.33C70.51,6.33 70.51,14.78 70.94,14.78C71.38,14.78 71.38,10.63 71.81,10.63C72.24,10.63 72.24,5.19 72.67,5.19C73.11,5.19 73.11,11.89 73.54,11.89C73.97,11.89 73.97,13.79 74.40,13.79C74.84,13.79 74.84,5.10 75.27,5.10C75.70,5.10 75.70,14.26 76.13,14.26C76.57,14.26 76.57,4.20 77.00,4.20" stroke="#3a9bd5" stroke-width="1.5" fill="none"/></svg><div class="card" style="left:1083.4px;top:177.6px;width:392px;height:72.6px"></div><div style="position:absolute;white-space:nowrap;will-change:transform;top:193px;font-size:13.5px;line-height:15px;color:#303030;-webkit-text-stroke-width:0.3px;transform:scaleX(1.084);transform-origin:left;left:1098.83px;">Orders fulfilled</div><div class="ul" style="left:1100px;top:208px;width:94px"></div><div style="position:absolute;white-space:nowrap;will-change:transform;top:216.2px;font-size:15px;line-height:17px;color:#303030;font-weight:bold;transform:scaleX(1.056);transform-origin:left;left:1098.75px;">383</div><svg style="position:absolute;left:1130.8px;top:222.8px" width="8" height="8" viewBox="0 0 8 8"><path d="M1.2 6.2 L5.6 1.8 M1.8 1.4 H6.2 V5.8" stroke="#29845a" stroke-width="1.7" fill="none" stroke-linecap="butt" stroke-linejoin="miter"/></svg><div style="position:absolute;white-space:nowrap;will-change:transform;top:221px;font-size:11px;line-height:12px;color:#29845a;font-weight:bold;left:1140.85px;">161%</div><svg class="abs" style="left:1382px;top:219px;overflow:visible" width="77" height="16"><path d="M0.0,15.4C0.43,15.36 0.43,15.36 0.87,15.36C1.30,15.36 1.30,4.00 1.73,4.00C2.16,4.00 2.16,15.36 2.60,15.36C3.03,15.36 3.03,8.00 3.46,8.00C3.89,8.00 3.89,15.36 4.33,15.36C4.76,15.36 4.76,15.36 5.19,15.36C5.62,15.36 5.62,15.36 6.06,15.36C6.49,15.36 6.49,2.40 6.92,2.40C7.35,2.40 7.35,15.36 7.79,15.36C8.22,15.36 8.22,9.60 8.65,9.60C9.08,9.60 9.08,15.36 9.52,15.36C9.95,15.36 9.95,15.36 10.38,15.36C10.81,15.36 10.81,15.36 11.25,15.36C11.68,15.36 11.68,15.36 12.11,15.36C12.54,15.36 12.54,15.36 12.98,15.36C13.41,15.36 13.41,2.40 13.84,2.40C14.28,2.40 14.28,15.36 14.71,15.36C15.14,15.36 15.14,15.36 15.57,15.36C16.01,15.36 16.01,8.80 16.44,8.80C16.87,8.80 16.87,15.36 17.30,15.36C17.74,15.36 17.74,7.20 18.17,7.20C18.60,7.20 18.60,15.36 19.03,15.36C19.47,15.36 19.47,15.36 19.90,15.36C20.33,15.36 20.33,15.36 20.76,15.36C21.20,15.36 21.20,15.36 21.63,15.36C22.06,15.36 22.06,9.60 22.49,9.60C22.93,9.60 22.93,15.36 23.36,15.36C23.79,15.36 23.79,15.36 24.22,15.36C24.66,15.36 24.66,3.20 25.09,3.20C25.52,3.20 25.52,15.36 25.96,15.36C26.39,15.36 26.39,15.36 26.82,15.36C27.25,15.36 27.25,7.20 27.69,7.20C28.12,7.20 28.12,15.36 28.55,15.36C28.98,15.36 28.98,15.36 29.42,15.36C29.85,15.36 29.85,15.36 30.28,15.36C30.71,15.36 30.71,4.80 31.15,4.80C31.58,4.80 31.58,15.36 32.01,15.36C32.44,15.36 32.44,15.36 32.88,15.36C33.31,15.36 33.31,15.36 33.74,15.36C34.17,15.36 34.17,8.80 34.61,8.80C35.04,8.80 35.04,15.36 35.47,15.36C35.90,15.36 35.90,15.36 36.34,15.36C36.77,15.36 36.77,15.36 37.20,15.36C37.63,15.36 37.63,8.00 38.07,8.00C38.50,8.00 38.50,15.36 38.93,15.36C39.37,15.36 39.37,15.36 39.80,15.36C40.23,15.36 40.23,15.36 40.66,15.36C41.10,15.36 41.10,15.36 41.53,15.36C41.96,15.36 41.96,4.80 42.39,4.80C42.83,4.80 42.83,15.36 43.26,15.36C43.69,15.36 43.69,15.36 44.12,15.36C44.56,15.36 44.56,10.40 44.99,10.40C45.42,10.40 45.42,15.36 45.85,15.36C46.29,15.36 46.29,15.36 46.72,15.36C47.15,15.36 47.15,6.40 47.58,6.40C48.02,6.40 48.02,15.36 48.45,15.36C48.88,15.36 48.88,15.36 49.31,15.36C49.75,15.36 49.75,15.36 50.18,15.36C50.61,15.36 50.61,15.36 51.04,15.36C51.48,15.36 51.48,15.36 51.91,15.36C52.34,15.36 52.34,15.36 52.78,15.36C53.21,15.36 53.21,15.36 53.64,15.36C54.07,15.36 54.07,0.00 54.51,0.00C54.94,0.00 54.94,15.36 55.37,15.36C55.80,15.36 55.80,15.36 56.24,15.36C56.67,15.36 56.67,11.20 57.10,11.20C57.53,11.20 57.53,15.36 57.97,15.36C58.40,15.36 58.40,15.36 58.83,15.36C59.26,15.36 59.26,5.60 59.70,5.60C60.13,5.60 60.13,15.36 60.56,15.36C60.99,15.36 60.99,15.36 61.43,15.36C61.86,15.36 61.86,15.36 62.29,15.36C62.72,15.36 62.72,15.36 63.16,15.36C63.59,15.36 63.59,15.36 64.02,15.36C64.46,15.36 64.46,15.36 64.89,15.36C65.32,15.36 65.32,5.60 65.75,5.60C66.19,5.60 66.19,15.36 66.62,15.36C67.05,15.36 67.05,15.36 67.48,15.36C67.92,15.36 67.92,15.36 68.35,15.36C68.78,15.36 68.78,15.36 69.21,15.36C69.65,15.36 69.65,15.36 70.08,15.36C70.51,15.36 70.51,15.36 70.94,15.36C71.38,15.36 71.38,15.36 71.81,15.36C72.24,15.36 72.24,15.36 72.67,15.36C73.11,15.36 73.11,15.36 73.54,15.36C73.97,15.36 73.97,2.40 74.40,2.40C74.84,2.40 74.84,15.36 75.27,15.36C75.70,15.36 75.70,15.36 76.13,15.36C76.57,15.36 76.57,10.40 77.00,10.40" stroke="#3a9bd5" stroke-width="1.5" fill="none"/></svg><div class="card" style="left:1492.4px;top:177.6px;width:392px;height:72.6px"></div><div style="position:absolute;white-space:nowrap;will-change:transform;top:193px;font-size:13.5px;line-height:15px;color:#303030;-webkit-text-stroke-width:0.3px;transform:scaleX(1.061);transform-origin:left;left:1507.83px;">Orders</div><div class="ul" style="left:1508px;top:208px;width:43px"></div><div style="position:absolute;white-space:nowrap;will-change:transform;top:216.2px;font-size:15px;line-height:17px;color:#303030;font-weight:bold;transform:scaleX(1.098);transform-origin:left;left:1507.75px;">400</div><svg style="position:absolute;left:1540.2px;top:222.8px" width="8" height="8" viewBox="0 0 8 8"><path d="M1.2 6.2 L5.6 1.8 M1.8 1.4 H6.2 V5.8" stroke="#29845a" stroke-width="1.7" fill="none" stroke-linecap="butt" stroke-linejoin="miter"/></svg><div style="position:absolute;white-space:nowrap;will-change:transform;top:221px;font-size:11px;line-height:12px;color:#29845a;font-weight:bold;transform:scaleX(1.105);transform-origin:left;left:1550.45px;">150%</div><svg class="abs" style="left:1790px;top:219px;overflow:visible" width="77" height="16"><path d="M0.0,11.9C0.43,11.88 0.43,8.94 0.87,8.94C1.30,8.94 1.30,9.24 1.73,9.24C2.16,9.24 2.16,9.60 2.60,9.60C3.03,9.60 3.03,11.59 3.46,11.59C3.89,11.59 3.89,8.36 4.33,8.36C4.76,8.36 4.76,8.28 5.19,8.28C5.62,8.28 5.62,9.93 6.06,9.93C6.49,9.93 6.49,9.97 6.92,9.97C7.35,9.97 7.35,11.48 7.79,11.48C8.22,11.48 8.22,4.80 8.65,4.80C9.08,4.80 9.08,10.72 9.52,10.72C9.95,10.72 9.95,9.52 10.38,9.52C10.81,9.52 10.81,12.41 11.25,12.41C11.68,12.41 11.68,8.35 12.11,8.35C12.54,8.35 12.54,11.50 12.98,11.50C13.41,11.50 13.41,11.50 13.84,11.50C14.28,11.50 14.28,12.56 14.71,12.56C15.14,12.56 15.14,7.20 15.57,7.20C16.01,7.20 16.01,8.66 16.44,8.66C16.87,8.66 16.87,7.90 17.30,7.90C17.74,7.90 17.74,9.35 18.17,9.35C18.60,9.35 18.60,12.61 19.03,12.61C19.47,12.61 19.47,0.80 19.90,0.80C20.33,0.80 20.33,10.01 20.76,10.01C21.20,10.01 21.20,12.15 21.63,12.15C22.06,12.15 22.06,7.47 22.49,7.47C22.93,7.47 22.93,10.74 23.36,10.74C23.79,10.74 23.79,11.93 24.22,11.93C24.66,11.93 24.66,8.22 25.09,8.22C25.52,8.22 25.52,12.10 25.96,12.10C26.39,12.10 26.39,7.60 26.82,7.60C27.25,7.60 27.25,10.26 27.69,10.26C28.12,10.26 28.12,0.80 28.55,0.80C28.98,0.80 28.98,10.88 29.42,10.88C29.85,10.88 29.85,10.09 30.28,10.09C30.71,10.09 30.71,11.75 31.15,11.75C31.58,11.75 31.58,12.59 32.01,12.59C32.44,12.59 32.44,7.20 32.88,7.20C33.31,7.20 33.31,11.48 33.74,11.48C34.17,11.48 34.17,8.43 34.61,8.43C35.04,8.43 35.04,11.63 35.47,11.63C35.90,11.63 35.90,7.37 36.34,7.37C36.77,7.37 36.77,6.40 37.20,6.40C37.63,6.40 37.63,8.57 38.07,8.57C38.50,8.57 38.50,8.53 38.93,8.53C39.37,8.53 39.37,9.55 39.80,9.55C40.23,9.55 40.23,8.71 40.66,8.71C41.10,8.71 41.10,7.20 41.53,7.20C41.96,7.20 41.96,10.13 42.39,10.13C42.83,10.13 42.83,8.17 43.26,8.17C43.69,8.17 43.69,11.67 44.12,11.67C44.56,11.67 44.56,7.63 44.99,7.63C45.42,7.63 45.42,7.83 45.85,7.83C46.29,7.83 46.29,10.51 46.72,10.51C47.15,10.51 47.15,10.75 47.58,10.75C48.02,10.75 48.02,2.40 48.45,2.40C48.88,2.40 48.88,10.64 49.31,10.64C49.75,10.64 49.75,7.23 50.18,7.23C50.61,7.23 50.61,10.64 51.04,10.64C51.48,10.64 51.48,8.80 51.91,8.80C52.34,8.80 52.34,12.28 52.78,12.28C53.21,12.28 53.21,8.78 53.64,8.78C54.07,8.78 54.07,7.24 54.51,7.24C54.94,7.24 54.94,10.02 55.37,10.02C55.80,10.02 55.80,10.05 56.24,10.05C56.67,10.05 56.67,9.72 57.10,9.72C57.53,9.72 57.53,8.61 57.97,8.61C58.40,8.61 58.40,7.20 58.83,7.20C59.26,7.20 59.26,9.39 59.70,9.39C60.13,9.39 60.13,9.68 60.56,9.68C60.99,9.68 60.99,9.31 61.43,9.31C61.86,9.31 61.86,6.40 62.29,6.40C62.72,6.40 62.72,11.85 63.16,11.85C63.59,11.85 63.59,10.85 64.02,10.85C64.46,10.85 64.46,7.61 64.89,7.61C65.32,7.61 65.32,4.80 65.75,4.80C66.19,4.80 66.19,9.46 66.62,9.46C67.05,9.46 67.05,11.08 67.48,11.08C67.92,11.08 67.92,12.22 68.35,12.22C68.78,12.22 68.78,12.43 69.21,12.43C69.65,12.43 69.65,0.00 70.08,0.00C70.51,0.00 70.51,8.45 70.94,8.45C71.38,8.45 71.38,10.70 71.81,10.70C72.24,10.70 72.24,8.97 72.67,8.97C73.11,8.97 73.11,8.00 73.54,8.00C73.97,8.00 73.97,7.77 74.40,7.77C74.84,7.77 74.84,7.43 75.27,7.43C75.70,7.43 75.70,10.52 76.13,10.52C76.57,10.52 76.57,4.00 77.00,4.00" stroke="#3a9bd5" stroke-width="1.5" fill="none"/></svg><div class="card" style="left:264.3px;top:267.3px;width:1074px;height:388.3px"></div><div style="position:absolute;white-space:nowrap;will-change:transform;top:283.4px;font-size:13.5px;line-height:15px;color:#303030;-webkit-text-stroke-width:0.3px;transform:scaleX(1.046);transform-origin:left;left:279.62px;">Total sales over time</div><div class="ul" style="left:280px;top:298px;width:128px"></div><div style="position:absolute;white-space:nowrap;will-change:transform;top:314.1px;font-size:21px;line-height:23px;color:#303030;font-weight:bold;transform:scaleX(1.071);transform-origin:left;left:279.25px;">$25,249.55</div><svg style="position:absolute;left:398.3px;top:322.5px" width="8" height="8" viewBox="0 0 8 8"><path d="M1.2 6.2 L5.6 1.8 M1.8 1.4 H6.2 V5.8" stroke="#29845a" stroke-width="1.7" fill="none" stroke-linecap="butt" stroke-linejoin="miter"/></svg><div style="position:absolute;white-space:nowrap;will-change:transform;top:321.2px;font-size:11px;line-height:12px;color:#29845a;font-weight:bold;transform:scaleX(1.076);transform-origin:left;left:408.05px;">124%</div><div class="abs" style="left:336px;top:361px;width:984px;height:1px;background:#efefef"></div><div style="position:absolute;white-space:nowrap;will-change:transform;top:355.4px;font-size:11.5px;line-height:12px;color:#616161;transform:scaleX(1.081);transform-origin:left;left:281.62px;">$2K</div><div class="abs" style="left:336px;top:413px;width:984px;height:1px;background:#efefef"></div><div style="position:absolute;white-space:nowrap;will-change:transform;top:407.25px;font-size:11.5px;line-height:12px;color:#616161;left:281.62px;">$1.5K</div><div class="abs" style="left:336px;top:465px;width:984px;height:1px;background:#efefef"></div><div style="position:absolute;white-space:nowrap;will-change:transform;top:459.1px;font-size:11.5px;line-height:12px;color:#616161;transform:scaleX(1.081);transform-origin:left;left:281.62px;">$1K</div><div class="abs" style="left:336px;top:517px;width:984px;height:1px;background:#efefef"></div><div style="position:absolute;white-space:nowrap;will-change:transform;top:510.95px;font-size:11.5px;line-height:12px;color:#616161;transform:scaleX(1.100);transform-origin:left;left:281.62px;">$500</div><div class="abs" style="left:336px;top:569px;width:984px;height:1px;background:#efefef"></div><div style="position:absolute;white-space:nowrap;will-change:transform;top:562.8px;font-size:11.5px;line-height:12px;color:#616161;transform:scaleX(1.131);transform-origin:left;left:281.62px;">$0</div><div style="position:absolute;white-space:nowrap;will-change:transform;top:584.5px;font-size:11.5px;line-height:12px;color:#616161;left:36px;width:600px;text-align:center;">Aug 5</div><div style="position:absolute;white-space:nowrap;will-change:transform;top:584.5px;font-size:11.5px;line-height:12px;color:#616161;left:102.2px;width:600px;text-align:center;">Aug 11</div><div style="position:absolute;white-space:nowrap;will-change:transform;top:584.5px;font-size:11.5px;line-height:12px;color:#616161;left:168.4px;width:600px;text-align:center;">Aug 17</div><div style="position:absolute;white-space:nowrap;will-change:transform;top:584.5px;font-size:11.5px;line-height:12px;color:#616161;left:234.61px;width:600px;text-align:center;">Aug 23</div><div style="position:absolute;white-space:nowrap;will-change:transform;top:584.5px;font-size:11.5px;line-height:12px;color:#616161;left:300.81px;width:600px;text-align:center;">Aug 29</div><div style="position:absolute;white-space:nowrap;will-change:transform;top:584.5px;font-size:11.5px;line-height:12px;color:#616161;left:367.01px;width:600px;text-align:center;">Sep 4</div><div style="position:absolute;white-space:nowrap;will-change:transform;top:584.5px;font-size:11.5px;line-height:12px;color:#616161;left:433.21px;width:600px;text-align:center;">Sep 10</div><div style="position:absolute;white-space:nowrap;will-change:transform;top:584.5px;font-size:11.5px;line-height:12px;color:#616161;left:499.42px;width:600px;text-align:center;">Sep 16</div><div style="position:absolute;white-space:nowrap;will-change:transform;top:584.5px;font-size:11.5px;line-height:12px;color:#616161;left:565.62px;width:600px;text-align:center;">Sep 22</div><div style="position:absolute;white-space:nowrap;will-change:transform;top:584.5px;font-size:11.5px;line-height:12px;color:#616161;left:631.82px;width:600px;text-align:center;">Sep 28</div><div style="position:absolute;white-space:nowrap;will-change:transform;top:584.5px;font-size:11.5px;line-height:12px;color:#616161;left:698.02px;width:600px;text-align:center;">Oct 4</div><div style="position:absolute;white-space:nowrap;will-change:transform;top:584.5px;font-size:11.5px;line-height:12px;color:#616161;left:764.22px;width:600px;text-align:center;">Oct 10</div><div style="position:absolute;white-space:nowrap;will-change:transform;top:584.5px;font-size:11.5px;line-height:12px;color:#616161;left:830.43px;width:600px;text-align:center;">Oct 16</div><div style="position:absolute;white-space:nowrap;will-change:transform;top:584.5px;font-size:11.5px;line-height:12px;color:#616161;left:896.63px;width:600px;text-align:center;">Oct 22</div><div style="position:absolute;white-space:nowrap;will-change:transform;top:584.5px;font-size:11.5px;line-height:12px;color:#616161;left:962.83px;width:600px;text-align:center;">Oct 28</div><svg class="abs" style="left:0;top:0" width="1919" height="943"><path d="M336.0,551.3C341.52,551.26 341.52,495.98 347.03,495.98C352.55,495.98 352.55,553.23 358.07,553.23C363.58,553.23 363.58,539.23 369.10,539.23C374.62,539.23 374.62,521.08 380.13,521.08C385.65,521.08 385.65,541.20 391.17,541.20C396.69,541.20 396.69,527.09 402.20,527.09C407.72,527.09 407.72,500.96 413.24,500.96C418.75,500.96 418.75,531.14 424.27,531.14C429.79,531.14 429.79,555.20 435.30,555.20C440.82,555.20 440.82,561.21 446.34,561.21C451.85,561.21 451.85,529.06 457.37,529.06C462.89,529.06 462.89,551.26 468.40,551.26C473.92,551.26 473.92,546.17 479.44,546.17C484.96,546.17 484.96,551.26 490.47,551.26C495.99,551.26 495.99,516.00 501.51,516.00C507.02,516.00 507.02,541.20 512.54,541.20C518.06,541.20 518.06,558.20 523.57,558.20C529.09,558.20 529.09,523.15 534.61,523.15C540.12,523.15 540.12,483.95 545.64,483.95C551.16,483.95 551.16,521.08 556.67,521.08C562.19,521.08 562.19,498.99 567.71,498.99C573.22,498.99 573.22,407.53 578.74,407.53C584.26,407.53 584.26,553.23 589.78,553.23C595.29,553.23 595.29,549.18 600.81,549.18C606.33,549.18 606.33,539.23 611.84,539.23C617.36,539.23 617.36,566.29 622.88,566.29C628.39,566.29 628.39,558.20 633.91,558.20C639.43,558.20 639.43,554.26 644.94,554.26C650.46,554.26 650.46,488.93 655.98,488.93C661.49,488.93 661.49,569.30 667.01,569.30C672.53,569.30 672.53,569.30 678.04,569.30C683.56,569.30 683.56,569.30 689.08,569.30C694.60,569.30 694.60,569.30 700.11,569.30C705.63,569.30 705.63,569.30 711.15,569.30C716.66,569.30 716.66,569.30 722.18,569.30C727.70,569.30 727.70,569.30 733.21,569.30C738.73,569.30 738.73,569.30 744.25,569.30C749.76,569.30 749.76,569.30 755.28,569.30C760.80,569.30 760.80,569.30 766.31,569.30C771.83,569.30 771.83,569.30 777.35,569.30C782.87,569.30 782.87,569.30 788.38,569.30C793.90,569.30 793.90,569.30 799.42,569.30C804.93,569.30 804.93,569.30 810.45,569.30C815.97,569.30 815.97,569.30 821.48,569.30C827.00,569.30 827.00,569.30 832.52,569.30C838.03,569.30 838.03,569.30 843.55,569.30C849.07,569.30 849.07,569.30 854.58,569.30C860.10,569.30 860.10,569.30 865.62,569.30C871.13,569.30 871.13,569.30 876.65,569.30C882.17,569.30 882.17,569.30 887.69,569.30C893.20,569.30 893.20,569.30 898.72,569.30C904.24,569.30 904.24,569.30 909.75,569.30C915.27,569.30 915.27,569.30 920.79,569.30C926.30,569.30 926.30,569.30 931.82,569.30C937.34,569.30 937.34,569.30 942.85,569.30C948.37,569.30 948.37,569.30 953.89,569.30C959.40,569.30 959.40,569.30 964.92,569.30C970.44,569.30 970.44,569.30 975.96,569.30C981.47,569.30 981.47,569.30 986.99,569.30C992.51,569.30 992.51,569.30 998.02,569.30C1003.54,569.30 1003.54,569.30 1009.06,569.30C1014.57,569.30 1014.57,569.30 1020.09,569.30C1025.61,569.30 1025.61,569.30 1031.12,569.30C1036.64,569.30 1036.64,569.30 1042.16,569.30C1047.67,569.30 1047.67,569.30 1053.19,569.30C1058.71,569.30 1058.71,569.30 1064.22,569.30C1069.74,569.30 1069.74,569.30 1075.26,569.30C1080.78,569.30 1080.78,569.30 1086.29,569.30C1091.81,569.30 1091.81,569.30 1097.33,569.30C1102.84,569.30 1102.84,569.30 1108.36,569.30C1113.88,569.30 1113.88,569.30 1119.39,569.30C1124.91,569.30 1124.91,569.30 1130.43,569.30C1135.94,569.30 1135.94,569.30 1141.46,569.30C1146.98,569.30 1146.98,569.30 1152.49,569.30C1158.01,569.30 1158.01,569.30 1163.53,569.30C1169.04,569.30 1169.04,569.30 1174.56,569.30C1180.08,569.30 1180.08,569.30 1185.60,569.30C1191.11,569.30 1191.11,569.30 1196.63,569.30C1202.15,569.30 1202.15,569.30 1207.66,569.30C1213.18,569.30 1213.18,569.30 1218.70,569.30C1224.21,569.30 1224.21,569.30 1229.73,569.30C1235.25,569.30 1235.25,569.30 1240.76,569.30C1246.28,569.30 1246.28,569.30 1251.80,569.30C1257.31,569.30 1257.31,569.30 1262.83,569.30C1268.35,569.30 1268.35,569.30 1273.87,569.30C1279.38,569.30 1279.38,569.30 1284.90,569.30C1290.42,569.30 1290.42,569.30 1295.93,569.30C1301.45,569.30 1301.45,569.30 1306.97,569.30C1312.48,569.30 1312.48,569.30 1318.00,569.30" stroke="#8fb0c4" stroke-width="1.5" fill="none" stroke-dasharray="1.5 2.5"/><path d="M336.0,554.8C341.52,554.78 341.52,558.20 347.03,558.20C352.55,558.20 352.55,536.12 358.07,536.12C363.58,536.12 363.58,563.29 369.10,563.29C374.62,563.29 374.62,545.24 380.13,545.24C385.65,545.24 385.65,528.13 391.17,528.13C396.69,528.13 396.69,569.30 402.20,569.30C407.72,569.30 407.72,548.25 413.24,548.25C418.75,548.25 418.75,537.15 424.27,537.15C429.79,537.15 429.79,556.23 435.30,556.23C440.82,556.23 440.82,565.26 446.34,565.26C451.85,565.26 451.85,562.25 457.37,562.25C462.89,562.25 462.89,494.95 468.40,494.95C473.92,494.95 473.92,555.20 479.44,555.20C484.96,555.20 484.96,554.26 490.47,554.26C495.99,554.26 495.99,543.58 501.51,543.58C507.02,543.58 507.02,556.23 512.54,556.23C518.06,556.23 518.06,562.25 523.57,562.25C529.09,562.25 529.09,560.28 534.61,560.28C540.12,560.28 540.12,551.26 545.64,551.26C551.16,551.26 551.16,559.24 556.67,559.24C562.19,559.24 562.19,560.28 567.71,560.28C573.22,560.28 573.22,557.89 578.74,557.89C584.26,557.89 584.26,547.21 589.78,547.21C595.29,547.21 595.29,518.07 600.81,518.07C606.33,518.07 606.33,562.25 611.84,562.25C617.36,562.25 617.36,520.66 622.88,520.66C628.39,520.66 628.39,548.25 633.91,548.25C639.43,548.25 639.43,469.85 644.94,469.85C650.46,469.85 650.46,556.23 655.98,556.23C661.49,556.23 661.49,556.23 667.01,556.23C672.53,556.23 672.53,546.80 678.04,546.80C683.56,546.80 683.56,559.86 689.08,559.86C694.60,559.86 694.60,540.78 700.11,540.78C705.63,540.78 705.63,528.13 711.15,528.13C716.66,528.13 716.66,551.26 722.18,551.26C727.70,551.26 727.70,547.21 733.21,547.21C738.73,547.21 738.73,551.26 744.25,551.26C749.76,551.26 749.76,569.30 755.28,569.30C760.80,569.30 760.80,535.18 766.31,535.18C771.83,535.18 771.83,466.84 777.35,466.84C782.87,466.84 782.87,533.11 788.38,533.11C793.90,533.11 793.90,523.05 799.42,523.05C804.93,523.05 804.93,543.17 810.45,543.17C815.97,543.17 815.97,551.26 821.48,551.26C827.00,551.26 827.00,556.23 832.52,556.23C838.03,556.23 838.03,551.26 843.55,551.26C849.07,551.26 849.07,517.04 854.58,517.04C860.10,517.04 860.10,526.06 865.62,526.06C871.13,526.06 871.13,526.06 876.65,526.06C882.17,526.06 882.17,569.30 887.69,569.30C893.20,569.30 893.20,550.22 898.72,550.22C904.24,550.22 904.24,541.20 909.75,541.20C915.27,541.20 915.27,556.23 920.79,556.23C926.30,556.23 926.30,525.12 931.82,525.12C937.34,525.12 937.34,549.18 942.85,549.18C948.37,549.18 948.37,568.89 953.89,568.89C959.40,568.89 959.40,560.28 964.92,560.28C970.44,560.28 970.44,569.30 975.96,569.30C981.47,569.30 981.47,562.87 986.99,562.87C992.51,562.87 992.51,555.20 998.02,555.20C1003.54,555.20 1003.54,495.98 1009.06,495.98C1014.57,495.98 1014.57,553.23 1020.09,553.23C1025.61,553.23 1025.61,539.23 1031.12,539.23C1036.64,539.23 1036.64,521.08 1042.16,521.08C1047.67,521.08 1047.67,542.23 1053.19,542.23C1058.71,542.23 1058.71,529.06 1064.22,529.06C1069.74,529.06 1069.74,500.96 1075.26,500.96C1080.78,500.96 1080.78,528.13 1086.29,528.13C1091.81,528.13 1091.81,554.26 1097.33,554.26C1102.84,554.26 1102.84,560.28 1108.36,560.28C1113.88,560.28 1113.88,529.06 1119.39,529.06C1124.91,529.06 1124.91,551.26 1130.43,551.26C1135.94,551.26 1135.94,546.17 1141.46,546.17C1146.98,546.17 1146.98,555.20 1152.49,555.20C1158.01,555.20 1158.01,516.00 1163.53,516.00C1169.04,516.00 1169.04,540.16 1174.56,540.16C1180.08,540.16 1180.08,561.21 1185.60,561.21C1191.11,561.21 1191.11,522.12 1196.63,522.12C1202.15,522.12 1202.15,483.95 1207.66,483.95C1213.18,483.95 1213.18,520.04 1218.70,520.04C1224.21,520.04 1224.21,497.95 1229.73,497.95C1235.25,497.95 1235.25,406.49 1240.76,406.49C1246.28,406.49 1246.28,553.23 1251.80,553.23C1257.31,553.23 1257.31,550.22 1262.83,550.22C1268.35,550.22 1268.35,539.23 1273.87,539.23C1279.38,539.23 1279.38,566.29 1284.90,566.29C1290.42,566.29 1290.42,558.20 1295.93,558.20C1301.45,558.20 1301.45,556.23 1306.97,556.23C1312.48,556.23 1312.48,487.90 1318.00,487.90" stroke="#3a8cbe" stroke-width="1.8" fill="none" stroke-linejoin="round"/></svg><div class="abs" style="left:670px;top:627px;width:12px;height:2px;background:#3a8cbe;border-radius:1px"></div><div style="position:absolute;white-space:nowrap;will-change:transform;top:622px;font-size:11.5px;line-height:12px;color:#616161;transform:scaleX(1.020);transform-origin:left;left:689.22px;">Aug 5–Nov 2, 2024</div><svg class="abs" style="left:807px;top:626px" width="14" height="4"><path d="M1 2H13" stroke="#8fb0c4" stroke-width="1.5" stroke-dasharray="1.5 2.5"/></svg><div style="position:absolute;white-space:nowrap;will-change:transform;top:622px;font-size:11.5px;line-height:12px;color:#616161;transform:scaleX(1.023);transform-origin:left;left:827.42px;">Oct 4–Nov 3, 2024</div><div class="card" style="left:1355.5px;top:267.3px;width:528.8px;height:388.3px"></div><div style="position:absolute;white-space:nowrap;will-change:transform;top:283.4px;font-size:13.5px;line-height:15px;color:#303030;-webkit-text-stroke-width:0.3px;transform:scaleX(1.052);transform-origin:left;left:1370.83px;">Total sales breakdown</div><div class="ul" style="left:1372px;top:298px;width:140px"></div><div class="abs" style="left:1371px;top:311px;width:494px;height:36.5px;background:#f7f7f7;border-radius:8px"></div><div style="position:absolute;white-space:nowrap;will-change:transform;top:322.2px;font-size:13px;line-height:15px;color:#303030;transform:scaleX(1.055);transform-origin:left;left:1383.35px;">Gross sales</div><div style="position:absolute;white-space:nowrap;will-change:transform;top:322.2px;font-size:13px;line-height:15px;color:#303030;transform:scaleX(1.064);transform-origin:right;right:113.85px;">$26,641.20</div><svg style="position:absolute;left:1812.75px;top:325.7px" width="8" height="8" viewBox="0 0 8 8"><path d="M1.2 6.2 L5.6 1.8 M1.8 1.4 H6.2 V5.8" stroke="#29845a" stroke-width="1.7" fill="none" stroke-linecap="butt" stroke-linejoin="miter"/></svg><div style="position:absolute;white-space:nowrap;will-change:transform;top:324px;font-size:11px;line-height:12px;color:#29845a;font-weight:bold;transform:scaleX(1.065);transform-origin:left;left:1823.2px;">124%</div><div class="abs" style="left:1371px;top:351.65px;width:494px;height:36.5px;background:#f7f7f7;border-radius:8px"></div><div style="position:absolute;white-space:nowrap;will-change:transform;top:362.85px;font-size:13px;line-height:15px;color:#303030;transform:scaleX(1.091);transform-origin:left;left:1383.35px;">Discounts</div><div style="position:absolute;white-space:nowrap;will-change:transform;top:362.85px;font-size:13px;line-height:15px;color:#303030;transform:scaleX(1.123);transform-origin:right;right:113.85px;">-$2,447.43</div><svg style="position:absolute;left:1812.75px;top:366.35px" width="8" height="8" viewBox="0 0 8 8"><path d="M1.2 1.2 L5.6 5.6 M6.2 1.8 V6.2 H1.8" stroke="#616161" stroke-width="1.7" fill="none" stroke-linecap="butt" stroke-linejoin="miter"/></svg><div style="position:absolute;white-space:nowrap;will-change:transform;top:364.65px;font-size:11px;line-height:12px;color:#616161;font-weight:bold;transform:scaleX(1.065);transform-origin:left;left:1823.2px;">145%</div><div class="abs" style="left:1371px;top:392.3px;width:494px;height:36.5px;background:#f7f7f7;border-radius:8px"></div><div style="position:absolute;white-space:nowrap;will-change:transform;top:403.5px;font-size:13px;line-height:15px;color:#303030;transform:scaleX(1.067);transform-origin:left;left:1383.35px;">Returns</div><div style="position:absolute;white-space:nowrap;will-change:transform;top:403.5px;font-size:13px;line-height:15px;color:#303030;transform:scaleX(1.156);transform-origin:right;right:113.85px;">-$403.80</div><svg style="position:absolute;left:1816.7px;top:407px" width="8" height="8" viewBox="0 0 8 8"><path d="M1.2 6.2 L5.6 1.8 M1.8 1.4 H6.2 V5.8" stroke="#616161" stroke-width="1.7" fill="none" stroke-linecap="butt" stroke-linejoin="miter"/></svg><div style="position:absolute;white-space:nowrap;will-change:transform;top:405.3px;font-size:11px;line-height:12px;color:#616161;font-weight:bold;left:1827.15px;">71%</div><div class="abs" style="left:1371px;top:432.95px;width:494px;height:36.5px;background:#f7f7f7;border-radius:8px"></div><div style="position:absolute;white-space:nowrap;will-change:transform;top:444.15px;font-size:13px;line-height:15px;color:#303030;transform:scaleX(1.073);transform-origin:left;left:1383.35px;">Net sales</div><div style="position:absolute;white-space:nowrap;will-change:transform;top:444.15px;font-size:13px;line-height:15px;color:#303030;transform:scaleX(1.081);transform-origin:right;right:113.85px;">$23,789.97</div><svg style="position:absolute;left:1812.75px;top:447.65px" width="8" height="8" viewBox="0 0 8 8"><path d="M1.2 6.2 L5.6 1.8 M1.8 1.4 H6.2 V5.8" stroke="#29845a" stroke-width="1.7" fill="none" stroke-linecap="butt" stroke-linejoin="miter"/></svg><div style="position:absolute;white-space:nowrap;will-change:transform;top:445.95px;font-size:11px;line-height:12px;color:#29845a;font-weight:bold;transform:scaleX(1.065);transform-origin:left;left:1823.2px;">123%</div><div class="abs" style="left:1371px;top:473.6px;width:494px;height:36.5px;background:#f7f7f7;border-radius:8px"></div><div style="position:absolute;white-space:nowrap;will-change:transform;top:484.8px;font-size:13px;line-height:15px;color:#303030;transform:scaleX(1.079);transform-origin:left;left:1383.35px;">Shipping charges</div><div style="position:absolute;white-space:nowrap;will-change:transform;top:484.8px;font-size:13px;line-height:15px;color:#303030;transform:scaleX(1.024);transform-origin:right;right:113.85px;">$1,077.58</div><svg style="position:absolute;left:1812.7px;top:488.3px" width="8" height="8" viewBox="0 0 8 8"><path d="M1.2 6.2 L5.6 1.8 M1.8 1.4 H6.2 V5.8" stroke="#29845a" stroke-width="1.7" fill="none" stroke-linecap="butt" stroke-linejoin="miter"/></svg><div style="position:absolute;white-space:nowrap;will-change:transform;top:486.6px;font-size:11px;line-height:12px;color:#29845a;font-weight:bold;transform:scaleX(1.068);transform-origin:left;left:1823.15px;">183%</div><div class="abs" style="left:1371px;top:514.25px;width:494px;height:36.5px;background:#f7f7f7;border-radius:8px"></div><div style="position:absolute;white-space:nowrap;will-change:transform;top:525.45px;font-size:13px;line-height:15px;color:#303030;transform:scaleX(1.069);transform-origin:left;left:1383.35px;">Return fees</div><div style="position:absolute;white-space:nowrap;will-change:transform;top:525.45px;font-size:13px;line-height:15px;color:#303030;transform:scaleX(1.151);transform-origin:right;right:113.85px;">$0.00</div><div class="abs" style="left:1828px;top:533.75px;width:11px;height:1.5px;background:#6a6a6a"></div><div class="abs" style="left:1371px;top:554.9px;width:494px;height:36.5px;background:#f7f7f7;border-radius:8px"></div><div style="position:absolute;white-space:nowrap;will-change:transform;top:566.1px;font-size:13px;line-height:15px;color:#303030;transform:scaleX(1.086);transform-origin:left;left:1383.35px;">Taxes</div><div style="position:absolute;white-space:nowrap;will-change:transform;top:566.1px;font-size:13px;line-height:15px;color:#303030;transform:scaleX(1.139);transform-origin:right;right:113.85px;">$382.00</div><svg style="position:absolute;left:1814.7px;top:569.6px" width="8" height="8" viewBox="0 0 8 8"><path d="M1.2 6.2 L5.6 1.8 M1.8 1.4 H6.2 V5.8" stroke="#8a8a8a" stroke-width="1.7" fill="none" stroke-linecap="butt" stroke-linejoin="miter"/></svg><div style="position:absolute;white-space:nowrap;will-change:transform;top:567.9px;font-size:11px;line-height:12px;color:#8a8a8a;font-weight:bold;letter-spacing:0.09px;transform:scaleX(1.180);transform-origin:left;left:1825.15px;">86%</div><div class="abs" style="left:1371px;top:595.55px;width:494px;height:36.5px;background:#f7f7f7;border-radius:8px"></div><div style="position:absolute;white-space:nowrap;will-change:transform;top:606.75px;font-size:13px;line-height:15px;color:#303030;transform:scaleX(1.084);transform-origin:left;left:1383.35px;">Total sales</div><div style="position:absolute;white-space:nowrap;will-change:transform;top:606.75px;font-size:13px;line-height:15px;color:#303030;transform:scaleX(1.103);transform-origin:right;right:113.85px;">$25,249.55</div><svg style="position:absolute;left:1812.75px;top:610.25px" width="8" height="8" viewBox="0 0 8 8"><path d="M1.2 6.2 L5.6 1.8 M1.8 1.4 H6.2 V5.8" stroke="#29845a" stroke-width="1.7" fill="none" stroke-linecap="butt" stroke-linejoin="miter"/></svg><div style="position:absolute;white-space:nowrap;will-change:transform;top:608.55px;font-size:11px;line-height:12px;color:#29845a;font-weight:bold;transform:scaleX(1.065);transform-origin:left;left:1823.2px;">124%</div><div class="card" style="left:264.3px;top:941.5px;width:529.3px;height:40px"></div><div class="card" style="left:810.4px;top:941.5px;width:528.9px;height:40px"></div><div class="card" style="left:1355.9px;top:941.5px;width:528.3px;height:40px"></div><div class="card" style="left:264.3px;top:672.5px;width:529.3px;height:252.7px"></div><div style="position:absolute;white-space:nowrap;will-change:transform;top:688.4px;font-size:13.5px;line-height:15px;color:#303030;-webkit-text-stroke-width:0.3px;transform:scaleX(1.043);transform-origin:left;left:279.32px;">Total sales by sales channel</div><div class="ul" style="left:280px;top:703px;width:175px"></div><svg class="abs" style="left:0;top:0" width="1919" height="943"><defs><linearGradient id="gb" x1="0" y1="0" x2="1" y2="1"><stop offset="0" stop-color="#3399dd"/><stop offset="1" stop-color="#3fa9e6"/></linearGradient><linearGradient id="gp" x1="0" y1="0" x2="0" y2="1"><stop offset="0" stop-color="#a06cf0"/><stop offset="1" stop-color="#9457e6"/></linearGradient></defs><path d="M394.93 733.43 A83.30 83.30 0 1 1 309.33 819.03 L324.83 818.59 A67.80 67.80 0 1 0 394.49 748.93 Z" fill="url(#gb)" stroke="#3aa3e2" stroke-width="1.2" stroke-linejoin="round"/><path d="M309.31 815.39 A83.30 83.30 0 0 1 388.39 733.51 L389.17 748.99 A67.80 67.80 0 0 0 324.81 815.64 Z" fill="url(#gp)" stroke="#9a62ea" stroke-width="1.2" stroke-linejoin="round"/></svg><div style="position:absolute;white-space:nowrap;will-change:transform;top:797px;font-size:21px;line-height:23px;color:#303030;font-weight:bold;transform:scaleX(1.022);transform-origin:left;left:357.65px;">$25.2K</div><svg style="position:absolute;left:372px;top:825.3px" width="8" height="8" viewBox="0 0 8 8"><path d="M1.2 6.2 L5.6 1.8 M1.8 1.4 H6.2 V5.8" stroke="#29845a" stroke-width="1.7" fill="none" stroke-linecap="butt" stroke-linejoin="miter"/></svg><div style="position:absolute;white-space:nowrap;will-change:transform;top:824.5px;font-size:11px;line-height:12px;color:#29845a;font-weight:bold;transform:scaleX(1.087);transform-origin:left;left:381.75px;">124%</div><div class="abs" style="left:507px;top:783px;width:12px;height:12px;border-radius:2px;background:linear-gradient(135deg,#3a9ee0,#45b0ea)"></div><div style="position:absolute;white-space:nowrap;will-change:transform;top:782.2px;font-size:12.5px;line-height:14px;color:#616161;transform:scaleX(1.014);transform-origin:left;left:521.08px;">Online Store</div><div style="position:absolute;white-space:nowrap;will-change:transform;top:782.2px;font-size:12.5px;line-height:14px;color:#616161;transform:scaleX(0.987);transform-origin:right;right:1202.38px;">$18.9K</div><svg style="position:absolute;left:719.8px;top:785.3px" width="8" height="8" viewBox="0 0 8 8"><path d="M1.2 6.2 L5.6 1.8 M1.8 1.4 H6.2 V5.8" stroke="#29845a" stroke-width="1.7" fill="none" stroke-linecap="butt" stroke-linejoin="miter"/></svg><div style="position:absolute;white-space:nowrap;will-change:transform;top:783px;font-size:10.5px;line-height:12px;color:#29845a;font-weight:bold;transform:scaleX(0.919);transform-origin:left;left:728.98px;">141%</div><div class="abs" style="left:507px;top:811px;width:12px;height:12px;border-radius:2px;background:linear-gradient(135deg,#7b3fe0,#a067f0)"></div><div style="position:absolute;white-space:nowrap;will-change:transform;top:810.2px;font-size:12.5px;line-height:14px;color:#616161;transform:scaleX(1.017);transform-origin:left;left:521.08px;">Facebook &amp; Instagram</div><div style="position:absolute;white-space:nowrap;will-change:transform;top:810.2px;font-size:12.5px;line-height:14px;color:#616161;transform:scaleX(1.046);transform-origin:right;right:1202.38px;">$6.3K</div><svg style="position:absolute;left:719.8px;top:813.3px" width="8" height="8" viewBox="0 0 8 8"><path d="M1.2 6.2 L5.6 1.8 M1.8 1.4 H6.2 V5.8" stroke="#29845a" stroke-width="1.7" fill="none" stroke-linecap="butt" stroke-linejoin="miter"/></svg><div style="position:absolute;white-space:nowrap;will-change:transform;top:810px;font-size:12px;line-height:14px;color:#29845a;font-weight:bold;transform:scaleX(1.059);transform-origin:left;left:728.9px;">82%</div><div class="abs" style="left:507px;top:839px;width:12px;height:12px;border-radius:2px;background:linear-gradient(135deg,#5f7ae8,#7b6ef0)"></div><div style="position:absolute;white-space:nowrap;will-change:transform;top:838.2px;font-size:12.5px;line-height:14px;color:#616161;transform:scaleX(1.019);transform-origin:left;left:521.08px;">Shop</div><div style="position:absolute;white-space:nowrap;will-change:transform;top:838.2px;font-size:12.5px;line-height:14px;color:#616161;transform:scaleX(0.954);transform-origin:right;right:1202.38px;">$127.7</div><div class="abs" style="left:721px;top:845px;width:12px;height:1.2px;background:#8a8a8a"></div><div class="card" style="left:810.4px;top:672.5px;width:528.9px;height:252.7px"></div><div style="position:absolute;white-space:nowrap;will-change:transform;top:688.4px;font-size:13.5px;line-height:15px;color:#303030;-webkit-text-stroke-width:0.3px;transform:scaleX(1.039);transform-origin:left;left:825.83px;">Average order value over time</div><div class="ul" style="left:826px;top:703px;width:187px"></div><div style="position:absolute;white-space:nowrap;will-change:transform;top:717.8px;font-size:22px;line-height:25px;color:#303030;font-weight:bold;transform:scaleX(1.052);transform-origin:left;left:825.4px;">$60.48</div><svg style="position:absolute;left:902.8px;top:727.8px" width="8" height="8" viewBox="0 0 8 8"><path d="M1.2 1.2 L5.6 5.6 M6.2 1.8 V6.2 H1.8" stroke="#303030" stroke-width="1.7" fill="none" stroke-linecap="butt" stroke-linejoin="miter"/></svg><div style="position:absolute;white-space:nowrap;will-change:transform;top:726.5px;font-size:10.5px;line-height:12px;color:#303030;font-weight:bold;transform:scaleX(0.995);transform-origin:left;left:913.27px;">11%</div><div class="abs" style="left:880px;top:766px;width:442px;height:1px;background:#efefef"></div><div style="position:absolute;white-space:nowrap;will-change:transform;top:759.9px;font-size:11.5px;line-height:12px;color:#616161;transform:scaleX(1.100);transform-origin:left;left:827.42px;">$500</div><div class="abs" style="left:880px;top:839px;width:442px;height:1px;background:#efefef"></div><div style="position:absolute;white-space:nowrap;will-change:transform;top:832.7px;font-size:11.5px;line-height:12px;color:#616161;transform:scaleX(1.131);transform-origin:left;left:827.42px;">$0</div><div style="position:absolute;white-space:nowrap;will-change:transform;top:855px;font-size:11.5px;line-height:12px;color:#616161;left:580px;width:600px;text-align:center;">Aug 5</div><div style="position:absolute;white-space:nowrap;will-change:transform;top:855px;font-size:11.5px;line-height:12px;color:#616161;left:644.27px;width:600px;text-align:center;">Aug 18</div><div style="position:absolute;white-space:nowrap;will-change:transform;top:855px;font-size:11.5px;line-height:12px;color:#616161;left:708.54px;width:600px;text-align:center;">Aug 31</div><div style="position:absolute;white-space:nowrap;will-change:transform;top:855px;font-size:11.5px;line-height:12px;color:#616161;left:772.81px;width:600px;text-align:center;">Sep 13</div><div style="position:absolute;white-space:nowrap;will-change:transform;top:855px;font-size:11.5px;line-height:12px;color:#616161;left:837.08px;width:600px;text-align:center;">Sep 26</div><div style="position:absolute;white-space:nowrap;will-change:transform;top:855px;font-size:11.5px;line-height:12px;color:#616161;left:901.35px;width:600px;text-align:center;">Oct 9</div><div style="position:absolute;white-space:nowrap;will-change:transform;top:855px;font-size:11.5px;line-height:12px;color:#616161;left:965.62px;width:600px;text-align:center;">Oct 22</div><svg class="abs" style="left:0;top:0" width="1919" height="943"><path d="M880.0,831.3C882.47,831.35 882.47,833.68 884.94,833.68C887.42,833.68 887.42,830.76 889.89,830.76C892.36,830.76 892.36,828.43 894.83,828.43C897.30,828.43 897.30,830.18 899.78,830.18C902.25,830.18 902.25,833.68 904.72,833.68C907.19,833.68 907.19,817.66 909.66,817.66C912.13,817.66 912.13,790.29 914.61,790.29C917.08,790.29 917.08,830.76 919.55,830.76C922.02,830.76 922.02,831.35 924.49,831.35C926.97,831.35 926.97,831.93 929.44,831.93C931.91,831.93 931.91,831.35 934.38,831.35C936.85,831.35 936.85,831.35 939.33,831.35C941.80,831.35 941.80,830.76 944.27,830.76C946.74,830.76 946.74,831.35 949.21,831.35C951.69,831.35 951.69,831.93 954.16,831.93C956.63,831.93 956.63,831.93 959.10,831.93C961.57,831.93 961.57,831.35 964.04,831.35C966.52,831.35 966.52,831.35 968.99,831.35C971.46,831.35 971.46,827.85 973.93,827.85C976.40,827.85 976.40,827.12 978.88,827.12C981.35,827.12 981.35,830.18 983.82,830.18C986.29,830.18 986.29,824.94 988.76,824.94C991.24,824.94 991.24,831.35 993.71,831.35C996.18,831.35 996.18,827.85 998.65,827.85C1001.12,827.85 1001.12,834.84 1003.60,834.84C1006.07,834.84 1006.07,835.42 1008.54,835.42C1011.01,835.42 1011.01,827.85 1013.48,827.85C1015.96,827.85 1015.96,826.54 1018.43,826.54C1020.90,826.54 1020.90,827.85 1023.37,827.85C1025.84,827.85 1025.84,835.71 1028.31,835.71C1030.79,835.71 1030.79,839.50 1033.26,839.50C1035.73,839.50 1035.73,839.50 1038.20,839.50C1040.67,839.50 1040.67,839.50 1043.15,839.50C1045.62,839.50 1045.62,839.50 1048.09,839.50C1050.56,839.50 1050.56,839.50 1053.03,839.50C1055.51,839.50 1055.51,839.50 1057.98,839.50C1060.45,839.50 1060.45,839.50 1062.92,839.50C1065.39,839.50 1065.39,839.50 1067.87,839.50C1070.34,839.50 1070.34,839.50 1072.81,839.50C1075.28,839.50 1075.28,839.50 1077.75,839.50C1080.22,839.50 1080.22,839.50 1082.70,839.50C1085.17,839.50 1085.17,839.50 1087.64,839.50C1090.11,839.50 1090.11,839.50 1092.58,839.50C1095.06,839.50 1095.06,839.50 1097.53,839.50C1100.00,839.50 1100.00,839.50 1102.47,839.50C1104.94,839.50 1104.94,839.50 1107.42,839.50C1109.89,839.50 1109.89,839.50 1112.36,839.50C1114.83,839.50 1114.83,839.50 1117.30,839.50C1119.78,839.50 1119.78,839.50 1122.25,839.50C1124.72,839.50 1124.72,839.50 1127.19,839.50C1129.66,839.50 1129.66,839.50 1132.13,839.50C1134.61,839.50 1134.61,839.50 1137.08,839.50C1139.55,839.50 1139.55,839.50 1142.02,839.50C1144.49,839.50 1144.49,839.50 1146.97,839.50C1149.44,839.50 1149.44,839.50 1151.91,839.50C1154.38,839.50 1154.38,839.50 1156.85,839.50C1159.33,839.50 1159.33,839.50 1161.80,839.50C1164.27,839.50 1164.27,839.50 1166.74,839.50C1169.21,839.50 1169.21,839.50 1171.69,839.50C1174.16,839.50 1174.16,839.50 1176.63,839.50C1179.10,839.50 1179.10,839.50 1181.57,839.50C1184.04,839.50 1184.04,839.50 1186.52,839.50C1188.99,839.50 1188.99,839.50 1191.46,839.50C1193.93,839.50 1193.93,839.50 1196.40,839.50C1198.88,839.50 1198.88,839.50 1201.35,839.50C1203.82,839.50 1203.82,839.50 1206.29,839.50C1208.76,839.50 1208.76,839.50 1211.24,839.50C1213.71,839.50 1213.71,839.50 1216.18,839.50C1218.65,839.50 1218.65,839.50 1221.12,839.50C1223.60,839.50 1223.60,839.50 1226.07,839.50C1228.54,839.50 1228.54,839.50 1231.01,839.50C1233.48,839.50 1233.48,839.50 1235.96,839.50C1238.43,839.50 1238.43,839.50 1240.90,839.50C1243.37,839.50 1243.37,839.50 1245.84,839.50C1248.31,839.50 1248.31,839.50 1250.79,839.50C1253.26,839.50 1253.26,839.50 1255.73,839.50C1258.20,839.50 1258.20,839.50 1260.67,839.50C1263.15,839.50 1263.15,839.50 1265.62,839.50C1268.09,839.50 1268.09,839.50 1270.56,839.50C1273.03,839.50 1273.03,839.50 1275.51,839.50C1277.98,839.50 1277.98,839.50 1280.45,839.50C1282.92,839.50 1282.92,839.50 1285.39,839.50C1287.87,839.50 1287.87,839.50 1290.34,839.50C1292.81,839.50 1292.81,839.50 1295.28,839.50C1297.75,839.50 1297.75,839.50 1300.22,839.50C1302.70,839.50 1302.70,839.50 1305.17,839.50C1307.64,839.50 1307.64,839.50 1310.11,839.50C1312.58,839.50 1312.58,839.50 1315.06,839.50C1317.53,839.50 1317.53,839.50 1320.00,839.50" stroke="#8fb0c4" stroke-width="1.5" fill="none" stroke-dasharray="1.5 2.5"/><path d="M880.0,832.5C882.47,832.51 882.47,834.84 884.94,834.84C887.42,834.84 887.42,830.76 889.89,830.76C892.36,830.76 892.36,830.33 894.83,830.33C897.30,830.33 897.30,833.68 899.78,833.68C902.25,833.68 902.25,830.18 904.72,830.18C907.19,830.18 907.19,839.50 909.66,839.50C912.13,839.50 912.13,831.35 914.61,831.35C917.08,831.35 917.08,829.16 919.55,829.16C922.02,829.16 922.02,831.35 924.49,831.35C926.97,831.35 926.97,835.13 929.44,835.13C931.91,835.13 931.91,834.99 934.38,834.99C936.85,834.99 936.85,831.06 939.33,831.06C941.80,831.06 941.80,833.38 944.27,833.38C946.74,833.38 946.74,834.84 949.21,834.84C951.69,834.84 951.69,827.12 954.16,827.12C956.63,827.12 956.63,820.14 959.10,820.14C961.57,820.14 961.57,834.84 964.04,834.84C966.52,834.84 966.52,825.38 968.99,825.38C971.46,825.38 971.46,833.09 973.93,833.09C976.40,833.09 976.40,835.42 978.88,835.42C981.35,835.42 981.35,833.38 983.82,833.38C986.29,833.38 986.29,833.82 988.76,833.82C991.24,833.82 991.24,833.38 993.71,833.38C996.18,833.38 996.18,825.23 998.65,825.23C1001.12,825.23 1001.12,835.42 1003.60,835.42C1006.07,835.42 1006.07,831.93 1008.54,831.93C1011.01,831.93 1011.01,832.22 1013.48,832.22C1015.96,832.22 1015.96,830.33 1018.43,830.33C1020.90,830.33 1020.90,830.33 1023.37,830.33C1025.84,830.33 1025.84,833.82 1028.31,833.82C1030.79,833.82 1030.79,833.82 1033.26,833.82C1035.73,833.82 1035.73,833.09 1038.20,833.09C1040.67,833.09 1040.67,830.76 1043.15,830.76C1045.62,830.76 1045.62,830.18 1048.09,830.18C1050.56,830.18 1050.56,833.09 1053.03,833.09C1055.51,833.09 1055.51,824.21 1057.98,824.21C1060.45,824.21 1060.45,833.09 1062.92,833.09C1065.39,833.09 1065.39,835.71 1067.87,835.71C1070.34,835.71 1070.34,830.76 1072.81,830.76C1075.28,830.76 1075.28,829.89 1077.75,829.89C1080.22,829.89 1080.22,833.68 1082.70,833.68C1085.17,833.68 1085.17,826.54 1087.64,826.54C1090.11,826.54 1090.11,833.38 1092.58,833.38C1095.06,833.38 1095.06,826.54 1097.53,826.54C1100.00,826.54 1100.00,833.68 1102.47,833.68C1104.94,833.68 1104.94,827.71 1107.42,827.71C1109.89,827.71 1109.89,830.76 1112.36,830.76C1114.83,830.76 1114.83,829.89 1117.30,829.89C1119.78,829.89 1119.78,830.18 1122.25,830.18C1124.72,830.18 1124.72,839.50 1127.19,839.50C1129.66,839.50 1129.66,830.18 1132.13,830.18C1134.61,830.18 1134.61,831.93 1137.08,831.93C1139.55,831.93 1139.55,830.76 1142.02,830.76C1144.49,830.76 1144.49,831.93 1146.97,831.93C1149.44,831.93 1149.44,833.09 1151.91,833.09C1154.38,833.09 1154.38,839.50 1156.85,839.50C1159.33,839.50 1159.33,832.51 1161.80,832.51C1164.27,832.51 1164.27,839.50 1166.74,839.50C1169.21,839.50 1169.21,834.99 1171.69,834.99C1174.16,834.99 1174.16,832.80 1176.63,832.80C1179.10,832.80 1179.10,831.35 1181.57,831.35C1184.04,831.35 1184.04,832.51 1186.52,832.51C1188.99,832.51 1188.99,828.73 1191.46,828.73C1193.93,828.73 1193.93,830.18 1196.40,830.18C1198.88,830.18 1198.88,833.68 1201.35,833.68C1203.82,833.68 1203.82,809.80 1206.29,809.80C1208.76,809.80 1208.76,791.16 1211.24,791.16C1213.71,791.16 1213.71,830.18 1216.18,830.18C1218.65,830.18 1218.65,829.60 1221.12,829.60C1223.60,829.60 1223.60,832.51 1226.07,832.51C1228.54,832.51 1228.54,831.64 1231.01,831.64C1233.48,831.64 1233.48,831.64 1235.96,831.64C1238.43,831.64 1238.43,834.70 1240.90,834.70C1243.37,834.70 1243.37,830.76 1245.84,830.76C1248.31,830.76 1248.31,831.64 1250.79,831.64C1253.26,831.64 1253.26,832.51 1255.73,832.51C1258.20,832.51 1258.20,828.29 1260.67,828.29C1263.15,828.29 1263.15,831.93 1265.62,831.93C1268.09,831.93 1268.09,829.02 1270.56,829.02C1273.03,829.02 1273.03,827.12 1275.51,827.12C1277.98,827.12 1277.98,830.18 1280.45,830.18C1282.92,830.18 1282.92,824.79 1285.39,824.79C1287.87,824.79 1287.87,832.51 1290.34,832.51C1292.81,832.51 1292.81,832.51 1295.28,832.51C1297.75,832.51 1297.75,827.12 1300.22,827.12C1302.70,827.12 1302.70,835.13 1305.17,835.13C1307.64,835.13 1307.64,834.70 1310.11,834.70C1312.58,834.70 1312.58,826.25 1315.06,826.25C1317.53,826.25 1317.53,828.73 1320.00,828.73" stroke="#3a8cbe" stroke-width="1.7" fill="none" stroke-linejoin="round"/></svg><div class="abs" style="left:943px;top:897px;width:12px;height:2px;background:#3a8cbe;border-radius:1px"></div><div style="position:absolute;white-space:nowrap;will-change:transform;top:892px;font-size:11.5px;line-height:12px;color:#616161;transform:scaleX(1.019);transform-origin:left;left:962.42px;">Aug 5–Nov 2, 2024</div><svg class="abs" style="left:1080px;top:896px" width="14" height="4"><path d="M1 2H13" stroke="#8fb0c4" stroke-width="1.5" stroke-dasharray="1.5 2.5"/></svg><div style="position:absolute;white-space:nowrap;will-change:transform;top:892px;font-size:11.5px;line-height:12px;color:#616161;transform:scaleX(1.026);transform-origin:left;left:1100.62px;">Oct 4–Nov 3, 2024</div><div class="card" style="left:1355.9px;top:672.5px;width:528.3px;height:252.7px"></div><div style="position:absolute;white-space:nowrap;will-change:transform;top:688.4px;font-size:13.5px;line-height:15px;color:#303030;-webkit-text-stroke-width:0.3px;transform:scaleX(1.062);transform-origin:left;left:1370.53px;">Total sales by product</div><div class="ul" style="left:1371px;top:703px;width:138px"></div><div style="position:absolute;white-space:nowrap;will-change:transform;top:728.7px;font-size:11.5px;line-height:12px;color:#616161;transform:scaleX(1.017);transform-origin:left;left:1370.62px;">Floral Paw T-Shirt · Rocking The Dog Mom Life · T-Shirt</div><div class="abs" style="left:1371px;top:744px;width:445px;height:31px;border-radius:0 3px 3px 0;background:linear-gradient(90deg,#3591d4,#53b9ee)"></div><div style="position:absolute;white-space:nowrap;will-change:transform;top:754px;font-size:11.5px;line-height:12px;color:#616161;transform:scaleX(0.986);transform-origin:left;left:1825.42px;">$1.2K</div><div class="abs" style="left:1371px;top:778px;width:87px;height:31px;border-radius:0 3px 3px 0;background:#93c8e8"></div><div style="position:absolute;white-space:nowrap;will-change:transform;top:787.5px;font-size:11.5px;line-height:12px;color:#616161;transform:scaleX(1.078);transform-origin:left;left:1467.33px;">$228.2</div><div style="position:absolute;white-space:nowrap;will-change:transform;top:830px;font-size:11.5px;line-height:12px;color:#616161;transform:scaleX(1.011);transform-origin:left;left:1370.62px;">Some Therapists Have Paws Long Sleeves · rockingthedogmomlife · Long Sleeves</div><div class="abs" style="left:1371px;top:845px;width:300px;height:31px;border-radius:0 3px 3px 0;background:linear-gradient(90deg,#3591d4,#48abe6)"></div><div class="abs" style="left:1371px;top:879px;width:300px;height:31px;border-radius:0 3px 3px 0;background:#93c8e8"></div><div class="abs" style="left:1586px;top:845px;width:208px;height:88px;border-radius:8px;background:linear-gradient(160deg,#eaf1f8 0%,#f3f6f9 60%,#f7f8f9 100%);box-shadow:0 4px 12px rgba(0,0,0,.18),0 0 0 1px rgba(0,0,0,.06)"></div><div class="abs" style="left:1711px;top:850px;width:38px;height:38px;border-radius:5px;background:#f7f9fb;box-shadow:0 0 0 1px rgba(0,0,0,.03)"></div><svg class="abs" style="left:1601px;top:859px" width="18" height="18" viewBox="0 0 18 18"><path d="M9 1.4C13.2 1.4 16.6 4.4 16.6 8.6C16.6 13.2 13.4 16.4 9 16.4C4.6 16.4 1.4 13.2 1.4 8.6C1.4 4.4 4.8 1.4 9 1.4Z" fill="#6aab2c"/><path d="M5.6 9.2L8 11.4L12.4 6.8" stroke="#fff" stroke-width="1.8" fill="none" stroke-linecap="round"/></svg><svg class="abs" style="left:1640px;top:859px" width="18" height="18" viewBox="0 0 18 18"><path d="M2.4 6L9 16L12 6Z" fill="#5c5c5c"/><path d="M2.4 6L9 16L6 6Z" fill="#8a8a8a"/><circle cx="13.2" cy="4.6" r="3.4" fill="#d83a4a"/><path d="M12 3.4L14.4 5.8M14.4 3.4L12 5.8" stroke="#fff" stroke-width="0.9"/></svg><svg class="abs" style="left:1680px;top:859px" width="18" height="18" viewBox="0 0 18 18"><path d="M6.6 3.2V14.8M11.4 3.2V14.8M3.2 6.6H14.8M3.2 11.4H14.8" stroke="#505050" stroke-width="3.3" stroke-linecap="round"/><path d="M6.6 3.2V14.8M11.4 3.2V14.8M3.2 6.6H14.8M3.2 11.4H14.8" stroke="#fff" stroke-width="1.5" stroke-linecap="round"/></svg><svg class="abs" style="left:1720px;top:859px" width="18" height="18" viewBox="0 0 18 18"><path d="M2.4 16C5.4 10.4 9.6 5 15.4 2.2C14 7.6 9.6 12.8 3.6 15.4Z" fill="#9f7fe0"/><path d="M2.4 16L11 8" stroke="#7d58c8" stroke-width="0.8"/></svg><svg class="abs" style="left:1761px;top:859px" width="18" height="18" viewBox="0 0 18 18"><path d="M4.4 5.4C4.4 3.2 6.4 1.8 9 1.8C11.6 1.8 13.6 3.2 13.6 5.4V16H4.4Z" fill="#2a2a2a"/><path d="M6.4 7.4V14.2M11.6 7.4V14.2M6.4 10.8H11.6" stroke="#e6e6e6" stroke-width="1.2"/><path d="M4.4 5.2H13.6" stroke="#777" stroke-width="1"/></svg><svg class="abs" style="left:1601px;top:900px" width="18" height="18" viewBox="0 0 18 18"><path d="M9 1.8L15.2 4V8.8C15.2 12.4 12.6 15.2 9 16.4C5.4 15.2 2.8 12.4 2.8 8.8V4Z" fill="#1f7ad8"/><path d="M9 1.8L15.2 4V8.8C15.2 9 15.2 9.2 15.2 9.4H9Z" fill="#5bb0f2"/><path d="M12.4 9.6L16.8 17H8Z" fill="#f6c400" stroke="#2a2a2a" stroke-width="0.5"/><path d="M12.4 12V14.6" stroke="#222" stroke-width="1"/></svg><svg class="abs" style="left:1640px;top:900px" width="18" height="18" viewBox="0 0 18 18"><rect x="4.6" y="1.8" width="8.8" height="14.4" rx="4.4" fill="#1479d6"/><path d="M6.6 6.4L11.2 10.8L9 12.8V4.6L11.2 6.8L6.6 11.2" stroke="#fff" stroke-width="1" fill="none"/></svg><div class="abs" style="left:1911px;top:68px;width:7px;height:251px;background:#b3b3b3"></div><svg class="abs" style="left:1910px;top:59px" width="9" height="8"><path d="M1.8 6L4.5 2.6L7.2 6Z" fill="#a3a3a3"/></svg><svg class="abs" style="left:1910px;top:931px" width="9" height="8"><path d="M1.8 2L4.5 5.4L7.2 2Z" fill="#a3a3a3"/></svg></body></html>
